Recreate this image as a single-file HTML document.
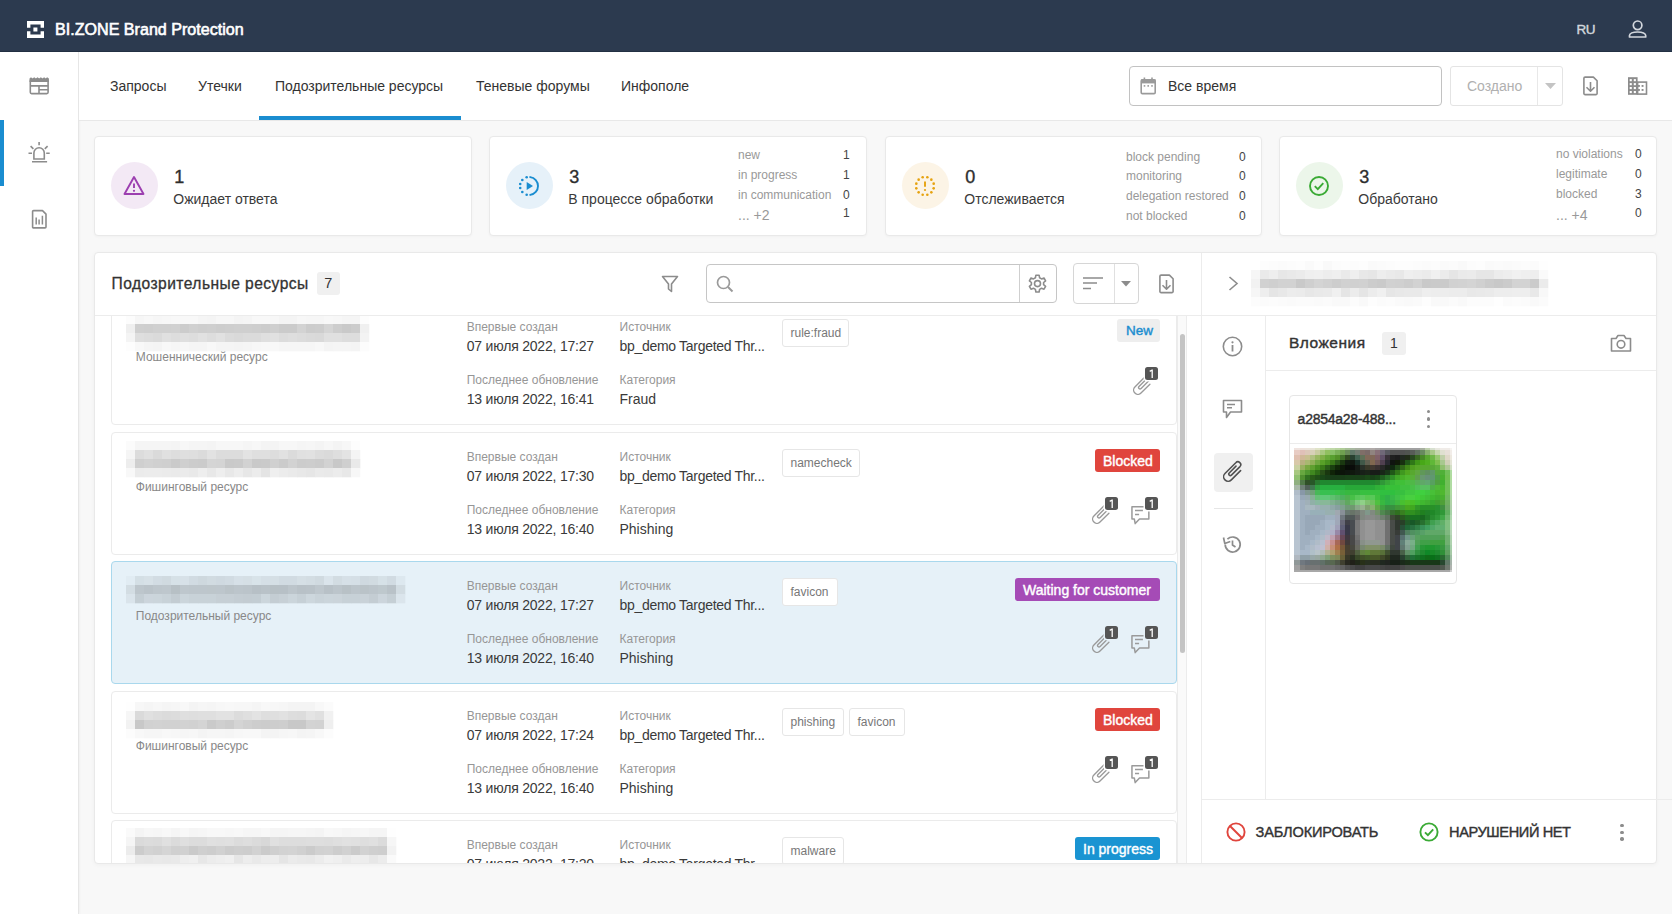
<!DOCTYPE html>
<html><head><meta charset="utf-8">
<style>
*{box-sizing:border-box;margin:0;padding:0}
html,body{width:1672px;height:914px;overflow:hidden;background:#f8f8f8;font-family:"Liberation Sans",sans-serif;color:#333}
.a{position:absolute}
.t{position:absolute;white-space:nowrap;line-height:1}
</style></head><body>
<div class="a" style="left:0px;top:0px;width:1672px;height:52px;background:#2c3a4f;border-bottom:1px solid #223043"></div>
<svg class="a" style="left:27px;top:21px" width="17" height="17" viewBox="0 0 17 17"><path d="M0 0H17V6.8H13.6V3.4H3.4V6.8H0Z M0 10.2H3.4V13.6H13.6V10.2H17V17H0Z" fill="#fff"/><rect x="6.4" y="6.5" width="4" height="4" fill="#fff"/></svg>
<div class="t" style="left:55px;top:20.87px;font-size:16.1px;color:#fff;-webkit-text-stroke:0.4px #fff;-webkit-text-stroke:0.6px #fff">BI.ZONE Brand Protection</div>
<div class="t" style="left:1576.5px;top:22.57px;font-size:13.5px;color:#d3d7dd;-webkit-text-stroke:0.4px #d3d7dd;letter-spacing:-0.6px">RU</div>
<svg class="a" style="left:1627px;top:19px" width="22" height="20" viewBox="0 0 22 20"><g fill="none" stroke="#d3d7dd" stroke-width="1.7"><circle cx="10.6" cy="6.3" r="4.3"/><path d="M2.5 18H18.7V16.6C18.7 14.3 15.5 13 10.6 13S2.5 14.3 2.5 16.6Z" stroke-linejoin="round"/></g></svg>
<div class="a" style="left:0px;top:52px;width:79px;height:862px;background:#fff;border-right:1px solid #e6e6e6;box-shadow:1px 0 2px rgba(0,0,0,0.035)"></div>
<div class="a" style="left:0px;top:120px;width:4px;height:66px;background:#1a8dd0"></div>
<svg class="a" style="left:29px;top:77px" width="21" height="18" viewBox="0 0 21 18"><g fill="none" stroke="#8c8c8c" stroke-width="1.6"><rect x="1.3" y="2.6" width="17.8" height="14" rx="1.3"/><path d="M1.3 8.85H19.1M10 8.85V16.6M10 12.8H19.1"/></g><path d="M0.5 5H19.9V1.6L18.1 0.2L16.7 1.4L15.1 0.2L13.5 1.4L11.9 0.2L10.2 1.4L8.5 0.2L6.9 1.4L5.2 0.2L3.5 1.4L2 0.2L0.5 1.6Z" fill="#8c8c8c"/></svg>
<svg class="a" style="left:28px;top:142px" width="22" height="21" viewBox="0 0 22 21"><g fill="none" stroke="#8c8c8c" stroke-width="1.6"><path d="M5.9 17H16.3V10.9A5.2 5.2 0 0 0 5.9 10.9Z"/><path d="M4 19.7H19.1M11.1 0V3.3M0.5 11.3H4M18.2 11.3H21.7M2.6 4.1L5.4 6.9M19.6 4.1L16.8 6.9"/></g></svg>
<svg class="a" style="left:31px;top:209px" width="17" height="20" viewBox="0 0 17 20"><g fill="none" stroke="#8c8c8c" stroke-width="1.6" stroke-linejoin="round"><path d="M1.6 2.6A1 1 0 0 1 2.6 1.6H11.5L15 5.1V17.9A1 1 0 0 1 14 18.9H2.6A1 1 0 0 1 1.6 17.9Z"/></g><g stroke="#8c8c8c" stroke-width="1.5"><path d="M5.2 15.5V8.4M8.1 15.5V10.6M11.4 15.5V6.8"/></g></svg>
<div class="a" style="left:79px;top:52px;width:1593px;height:69px;background:#fff;border-bottom:1px solid #e8e8e8"></div>
<div class="t" style="left:110px;top:78.95px;font-size:14px;color:#333">Запросы</div>
<div class="t" style="left:198px;top:78.95px;font-size:14px;color:#333">Утечки</div>
<div class="t" style="left:275px;top:78.95px;font-size:14px;color:#333">Подозрительные ресурсы</div>
<div class="t" style="left:476px;top:78.95px;font-size:14px;color:#333">Теневые форумы</div>
<div class="t" style="left:621px;top:78.95px;font-size:14px;color:#333">Инфополе</div>
<div class="a" style="left:259px;top:116px;width:202px;height:4px;background:#1a8dd0"></div>
<div class="a" style="left:1129px;top:66px;width:313px;height:40px;background:#fff;border:1.7px solid #c2c2c2;border-radius:4px"></div>
<svg class="a" style="left:1139px;top:77px" width="19" height="19" viewBox="0 0 19 19"><rect x="2.2" y="2.8" width="14" height="13.8" rx="1.2" fill="none" stroke="#9a9a9a" stroke-width="1.6"/><rect x="2" y="2.4" width="14.6" height="4" fill="#9a9a9a"/><path d="M5.4 0.4V3M13 0.4V3" stroke="#9a9a9a" stroke-width="1.6"/><g fill="#9a9a9a"><rect x="4.7" y="8.1" width="1.6" height="1.6"/><rect x="8.4" y="8.1" width="1.6" height="1.6"/><rect x="12.2" y="8.1" width="1.6" height="1.6"/></g></svg>
<div class="t" style="left:1168px;top:79.45px;font-size:14px;color:#333">Все время</div>
<div class="a" style="left:1450px;top:66px;width:113px;height:40px;background:#fff;border:1px solid #e4e4e4;border-radius:3px"></div>
<div class="a" style="left:1537px;top:67px;width:1px;height:38px;background:#e8e8e8"></div>
<div class="t" style="left:1467px;top:79.45px;font-size:14px;color:#b0b0b0">Создано</div>
<svg class="a" style="left:1545px;top:83px" width="11" height="6" viewBox="0 0 11 6"><path d="M0 0H11L5.5 6Z" fill="#c4c4c4"/></svg>
<svg class="a" style="left:1582px;top:76px" width="17" height="20" viewBox="0 0 17 20"><g fill="none" stroke="#8c8c8c" stroke-width="1.6" stroke-linejoin="round"><path d="M1.9 2.3A1.2 1.2 0 0 1 3.1 1.1H11.4L15.1 4.8V17.4A1.2 1.2 0 0 1 13.9 18.6H3.1A1.2 1.2 0 0 1 1.9 17.4Z"/><path d="M8.5 6V15.2M4.5 11.2L8.5 15.2L12.5 11.2"/></g></svg>
<svg class="a" style="left:1627px;top:77px" width="21" height="18" viewBox="0 0 21 18"><rect x="1" y="0.2" width="9.6" height="17.6" fill="#8c8c8c"/><g fill="#fff"><rect x="2.7" y="2.1" width="2.1" height="2.1"/><rect x="6.8" y="2.1" width="2.1" height="2.1"/><rect x="2.7" y="6.1" width="2.1" height="2.1"/><rect x="6.8" y="6.1" width="2.1" height="2.1"/><rect x="2.7" y="10" width="2.1" height="2.1"/><rect x="6.8" y="10" width="2.1" height="2.1"/><rect x="2.7" y="14" width="2.1" height="2.1"/><rect x="6.8" y="14" width="2.1" height="2.1"/></g><rect x="10.6" y="5.1" width="8.9" height="12" fill="none" stroke="#8c8c8c" stroke-width="1.6"/><g fill="#8c8c8c"><rect x="11" y="8" width="1.9" height="1.9"/><rect x="14.6" y="8" width="1.9" height="1.9"/><rect x="11" y="12" width="1.9" height="1.9"/><rect x="14.6" y="12" width="1.9" height="1.9"/></g></svg>
<div class="a" style="left:94px;top:136px;width:378px;height:100px;background:#fff;border:1px solid #e9e9e9;border-radius:4px;box-shadow:0 1px 3px rgba(0,0,0,0.03)"></div>
<div class="a" style="left:110.80000000000001px;top:162.4px;width:47px;height:47px;border-radius:50%;background:#f3e9f5"></div>
<svg class="a" style="left:123.30000000000001px;top:174.9px" width="22" height="22" viewBox="0 0 22 22"><g fill="none" stroke="#9c3fb0" stroke-width="1.9" stroke-linejoin="round"><path d="M11 2L20.5 19H1.5Z"/></g><path d="M11 8.5V13" stroke="#9c3fb0" stroke-width="1.9"/><circle cx="11" cy="15.8" r="1.1" fill="#9c3fb0"/></svg>
<div class="t" style="left:174.3px;top:167.76px;font-size:18px;color:#2e2e2e;-webkit-text-stroke:0.35px #2e2e2e">1</div>
<div class="t" style="left:173.3px;top:192.45px;font-size:14px;color:#3a3a3a">Ожидает ответа</div>
<div class="a" style="left:489px;top:136px;width:378px;height:100px;background:#fff;border:1px solid #e9e9e9;border-radius:4px;box-shadow:0 1px 3px rgba(0,0,0,0.03)"></div>
<div class="a" style="left:505.79999999999995px;top:162.4px;width:47px;height:47px;border-radius:50%;background:#e6f1f9"></div>
<svg class="a" style="left:518.3px;top:174.9px" width="22" height="22" viewBox="0 0 22 22"><path d="M12.2 2.08A9 9 0 0 1 12.2 19.92" fill="none" stroke="#1a8dd0" stroke-width="1.9" stroke-linecap="round"/><g fill="#1a8dd0"><circle cx="8.67" cy="2.31" r="1.3"/><circle cx="4.31" cy="4.98" r="1.3"/><circle cx="2.23" cy="8.98" r="1.3"/><circle cx="2.23" cy="13.02" r="1.3"/><circle cx="4.31" cy="17.02" r="1.3"/><circle cx="8.67" cy="19.69" r="1.3"/></g><path d="M8.7 6.9L15 11L8.7 15.1Z" fill="#1a8dd0"/></svg>
<div class="t" style="left:569.3px;top:167.76px;font-size:18px;color:#2e2e2e;-webkit-text-stroke:0.35px #2e2e2e">3</div>
<div class="t" style="left:568.3px;top:192.45px;font-size:14px;color:#3a3a3a">В процессе обработки</div>
<div class="t" style="left:738px;top:148.84px;font-size:12px;color:#999">new</div>
<div class="t" style="right:822.3px;top:148.84px;font-size:12px;color:#444">1</div>
<div class="t" style="left:738px;top:168.84px;font-size:12px;color:#999">in progress</div>
<div class="t" style="right:822.3px;top:168.84px;font-size:12px;color:#444">1</div>
<div class="t" style="left:738px;top:188.54px;font-size:12px;color:#999">in communication</div>
<div class="t" style="right:822.3px;top:188.54px;font-size:12px;color:#444">0</div>
<div class="t" style="left:738px;top:208.25px;font-size:14px;color:#999">... +2</div>
<div class="t" style="right:822.3px;top:207.34px;font-size:12px;color:#444">1</div>
<div class="a" style="left:885px;top:136px;width:377px;height:100px;background:#fff;border:1px solid #e9e9e9;border-radius:4px;box-shadow:0 1px 3px rgba(0,0,0,0.03)"></div>
<div class="a" style="left:901.8px;top:162.4px;width:47px;height:47px;border-radius:50%;background:#fcf4e6"></div>
<svg class="a" style="left:914.3px;top:174.9px" width="22" height="22" viewBox="0 0 22 22"><g fill="#e6a20f"><circle cx="19.69" cy="13.33" r="1.3"/><circle cx="17.36" cy="17.36" r="1.3"/><circle cx="13.33" cy="19.69" r="1.3"/><circle cx="8.67" cy="19.69" r="1.3"/><circle cx="4.64" cy="17.36" r="1.3"/><circle cx="2.31" cy="13.33" r="1.3"/><circle cx="2.31" cy="8.67" r="1.3"/><circle cx="4.64" cy="4.64" r="1.3"/><circle cx="8.67" cy="2.31" r="1.3"/><circle cx="13.33" cy="2.31" r="1.3"/><circle cx="17.36" cy="4.64" r="1.3"/><circle cx="19.69" cy="8.67" r="1.3"/></g><path d="M11 6.4V11.8" stroke="#e6a20f" stroke-width="1.9"/><circle cx="11" cy="15" r="1.1" fill="#e6a20f"/></svg>
<div class="t" style="left:965.3px;top:167.76px;font-size:18px;color:#2e2e2e;-webkit-text-stroke:0.35px #2e2e2e">0</div>
<div class="t" style="left:964.3px;top:192.45px;font-size:14px;color:#3a3a3a">Отслеживается</div>
<div class="t" style="left:1126px;top:150.74px;font-size:12px;color:#999">block pending</div>
<div class="t" style="right:426.3px;top:150.74px;font-size:12px;color:#444">0</div>
<div class="t" style="left:1126px;top:170.34px;font-size:12px;color:#999">monitoring</div>
<div class="t" style="right:426.3px;top:170.34px;font-size:12px;color:#444">0</div>
<div class="t" style="left:1126px;top:190.04px;font-size:12px;color:#999">delegation restored</div>
<div class="t" style="right:426.3px;top:190.04px;font-size:12px;color:#444">0</div>
<div class="t" style="left:1126px;top:209.74px;font-size:12px;color:#999">not blocked</div>
<div class="t" style="right:426.3px;top:209.74px;font-size:12px;color:#444">0</div>
<div class="a" style="left:1279px;top:136px;width:378px;height:100px;background:#fff;border:1px solid #e9e9e9;border-radius:4px;box-shadow:0 1px 3px rgba(0,0,0,0.03)"></div>
<div class="a" style="left:1295.8px;top:162.4px;width:47px;height:47px;border-radius:50%;background:#ecf6ea"></div>
<svg class="a" style="left:1308.3px;top:174.9px" width="22" height="22" viewBox="0 0 22 22"><circle cx="11" cy="11" r="9" fill="none" stroke="#3aaa35" stroke-width="1.9"/><path d="M6.8 11.2L9.8 14.2L15.3 8.2" fill="none" stroke="#3aaa35" stroke-width="1.9"/></svg>
<div class="t" style="left:1359.3px;top:167.76px;font-size:18px;color:#2e2e2e;-webkit-text-stroke:0.35px #2e2e2e">3</div>
<div class="t" style="left:1358.3px;top:192.45px;font-size:14px;color:#3a3a3a">Обработано</div>
<div class="t" style="left:1556px;top:148.34px;font-size:12px;color:#999">no violations</div>
<div class="t" style="right:30.3px;top:148.34px;font-size:12px;color:#444">0</div>
<div class="t" style="left:1556px;top:168.34px;font-size:12px;color:#999">legitimate</div>
<div class="t" style="right:30.3px;top:168.34px;font-size:12px;color:#444">0</div>
<div class="t" style="left:1556px;top:187.84px;font-size:12px;color:#999">blocked</div>
<div class="t" style="right:30.3px;top:187.84px;font-size:12px;color:#444">3</div>
<div class="t" style="left:1556px;top:207.75px;font-size:14px;color:#999">... +4</div>
<div class="t" style="right:30.3px;top:207.14px;font-size:12px;color:#444">0</div>
<div class="a" style="left:94px;top:252px;width:1563px;height:612px;background:#fff;border:1px solid #e9e9e9;border-radius:4px;box-shadow:0 1px 4px rgba(0,0,0,0.04)"></div>
<div class="a" style="left:1201px;top:253px;width:1px;height:610px;background:#ececec"></div>
<div class="a" style="left:95px;top:315px;width:1561px;height:1px;background:#ececec"></div>
<div class="t" style="left:111.5px;top:275.79px;font-size:15.6px;color:#333;-webkit-text-stroke:0.4px #333;letter-spacing:0.45px;-webkit-text-stroke:0.3px #333">Подозрительные ресурсы</div>
<div class="a" style="left:317px;top:272px;width:23px;height:23px;background:#f0f0f0;border-radius:3px"></div>
<div class="t" style="left:324.3px;top:276.32px;font-size:14.5px;color:#333">7</div>
<svg class="a" style="left:661px;top:275px" width="18" height="18" viewBox="0 0 18 18"><path d="M1.5 1.5H16.5L10.5 9V16.5L7.5 14V9Z" fill="none" stroke="#8c8c8c" stroke-width="1.6" stroke-linejoin="round"/></svg>
<div class="a" style="left:706px;top:264px;width:351px;height:39px;background:#fff;border:1.5px solid #c6c6c6;border-radius:4px"></div>
<div class="a" style="left:1019px;top:265px;width:1.3px;height:37px;background:#cfcfcf"></div>
<svg class="a" style="left:716px;top:275px" width="18" height="18" viewBox="0 0 18 18"><circle cx="7.5" cy="7.5" r="6" fill="none" stroke="#9a9a9a" stroke-width="1.7"/><path d="M12 12L16.5 16.5" stroke="#9a9a9a" stroke-width="2"/></svg>
<svg class="a" style="left:1027px;top:273px" width="21" height="21" viewBox="0 0 21 21"><g fill="none" stroke="#8c8c8c" stroke-width="1.6"><path d="M8.9 1.2H12.1L12.6 3.8L14.5 4.9L17 4L18.6 6.8L16.6 8.5V10.7L18.6 12.4L17 15.2L14.5 14.3L12.6 15.4L12.1 18H8.9L8.4 15.4L6.5 14.3L4 15.2L2.4 12.4L4.4 10.7V8.5L2.4 6.8L4 4L6.5 4.9L8.4 3.8Z" stroke-linejoin="round" transform="translate(0 1)"/><circle cx="10.5" cy="10.6" r="3"/></g></svg>
<div class="a" style="left:1073px;top:263px;width:66px;height:41px;background:#fff;border:1px solid #d6d6d6;border-radius:4px"></div>
<div class="a" style="left:1114px;top:264px;width:1px;height:39px;background:#e0e0e0"></div>
<svg class="a" style="left:1083px;top:277px" width="21" height="13" viewBox="0 0 21 13"><g stroke="#8c8c8c" stroke-width="1.6"><path d="M0 1H20M0 6H14M0 11.5H8"/></g></svg>
<svg class="a" style="left:1121px;top:281px" width="10" height="6" viewBox="0 0 10 6"><path d="M0 0H10L5 5.5Z" fill="#8c8c8c"/></svg>
<svg class="a" style="left:1158px;top:273.5px" width="17" height="20" viewBox="0 0 17 20"><g fill="none" stroke="#8c8c8c" stroke-width="1.6" stroke-linejoin="round"><path d="M1.9 2.3A1.2 1.2 0 0 1 3.1 1.1H11.4L15.1 4.8V17.4A1.2 1.2 0 0 1 13.9 18.6H3.1A1.2 1.2 0 0 1 1.9 17.4Z"/><path d="M8.5 6V15.2M4.5 11.2L8.5 15.2L12.5 11.2"/></g></svg>
<div class="a" style="left:95px;top:316px;width:1106px;height:547px;overflow:hidden">
<div class="a" style="left:16px;top:-14px;width:1066px;height:123px;background:#fff;border:1px solid #ebebeb;border-radius:4px">
<svg class="a" style="left:12.00px;top:10.00px;filter:blur(0.5px)" width="247" height="40"><rect x="2.00" y="2.00" width="9.30" height="9.30" fill="#fcfcfc"/><rect x="11.00" y="2.00" width="9.30" height="9.30" fill="#f6f6f6"/><rect x="20.00" y="2.00" width="9.30" height="9.30" fill="#f8f8f8"/><rect x="29.00" y="2.00" width="9.30" height="9.30" fill="#f6f6f6"/><rect x="38.00" y="2.00" width="9.30" height="9.30" fill="#f7f7f7"/><rect x="47.00" y="2.00" width="9.30" height="9.30" fill="#f8f8f8"/><rect x="56.00" y="2.00" width="9.30" height="9.30" fill="#f8f8f8"/><rect x="65.00" y="2.00" width="9.30" height="9.30" fill="#f8f8f8"/><rect x="74.00" y="2.00" width="9.30" height="9.30" fill="#f5f5f5"/><rect x="83.00" y="2.00" width="9.30" height="9.30" fill="#f4f4f4"/><rect x="92.00" y="2.00" width="9.30" height="9.30" fill="#f7f7f7"/><rect x="101.00" y="2.00" width="9.30" height="9.30" fill="#f7f7f7"/><rect x="110.00" y="2.00" width="9.30" height="9.30" fill="#f4f4f4"/><rect x="119.00" y="2.00" width="9.30" height="9.30" fill="#f5f5f5"/><rect x="128.00" y="2.00" width="9.30" height="9.30" fill="#f8f8f8"/><rect x="137.00" y="2.00" width="9.30" height="9.30" fill="#f8f8f8"/><rect x="146.00" y="2.00" width="9.30" height="9.30" fill="#f7f7f7"/><rect x="155.00" y="2.00" width="9.30" height="9.30" fill="#f4f4f4"/><rect x="164.00" y="2.00" width="9.30" height="9.30" fill="#f4f4f4"/><rect x="173.00" y="2.00" width="9.30" height="9.30" fill="#f7f7f7"/><rect x="182.00" y="2.00" width="9.30" height="9.30" fill="#f6f6f6"/><rect x="191.00" y="2.00" width="9.30" height="9.30" fill="#f6f6f6"/><rect x="200.00" y="2.00" width="9.30" height="9.30" fill="#f8f8f8"/><rect x="209.00" y="2.00" width="9.30" height="9.30" fill="#f7f7f7"/><rect x="218.00" y="2.00" width="9.30" height="9.30" fill="#f5f5f5"/><rect x="227.00" y="2.00" width="9.30" height="9.30" fill="#f5f5f5"/><rect x="236.00" y="2.00" width="9.30" height="9.30" fill="#fdfdfd"/><rect x="2.00" y="11.00" width="9.30" height="9.30" fill="#efefef"/><rect x="11.00" y="11.00" width="9.30" height="9.30" fill="#cfcfcf"/><rect x="20.00" y="11.00" width="9.30" height="9.30" fill="#cecece"/><rect x="29.00" y="11.00" width="9.30" height="9.30" fill="#d0d0d0"/><rect x="38.00" y="11.00" width="9.30" height="9.30" fill="#d0d0d0"/><rect x="47.00" y="11.00" width="9.30" height="9.30" fill="#d1d1d1"/><rect x="56.00" y="11.00" width="9.30" height="9.30" fill="#cccccc"/><rect x="65.00" y="11.00" width="9.30" height="9.30" fill="#d0d0d0"/><rect x="74.00" y="11.00" width="9.30" height="9.30" fill="#cecece"/><rect x="83.00" y="11.00" width="9.30" height="9.30" fill="#cfcfcf"/><rect x="92.00" y="11.00" width="9.30" height="9.30" fill="#cdcdcd"/><rect x="101.00" y="11.00" width="9.30" height="9.30" fill="#cecece"/><rect x="110.00" y="11.00" width="9.30" height="9.30" fill="#cfcfcf"/><rect x="119.00" y="11.00" width="9.30" height="9.30" fill="#cfcfcf"/><rect x="128.00" y="11.00" width="9.30" height="9.30" fill="#cecece"/><rect x="137.00" y="11.00" width="9.30" height="9.30" fill="#cccccc"/><rect x="146.00" y="11.00" width="9.30" height="9.30" fill="#cfcfcf"/><rect x="155.00" y="11.00" width="9.30" height="9.30" fill="#cbcbcb"/><rect x="164.00" y="11.00" width="9.30" height="9.30" fill="#cbcbcb"/><rect x="173.00" y="11.00" width="9.30" height="9.30" fill="#d3d3d3"/><rect x="182.00" y="11.00" width="9.30" height="9.30" fill="#cccccc"/><rect x="191.00" y="11.00" width="9.30" height="9.30" fill="#cdcdcd"/><rect x="200.00" y="11.00" width="9.30" height="9.30" fill="#d5d5d5"/><rect x="209.00" y="11.00" width="9.30" height="9.30" fill="#cdcdcd"/><rect x="218.00" y="11.00" width="9.30" height="9.30" fill="#c9c9c9"/><rect x="227.00" y="11.00" width="9.30" height="9.30" fill="#cccccc"/><rect x="236.00" y="11.00" width="9.30" height="9.30" fill="#f0f0f0"/><rect x="2.00" y="20.00" width="9.30" height="9.30" fill="#f4f4f4"/><rect x="11.00" y="20.00" width="9.30" height="9.30" fill="#dedede"/><rect x="20.00" y="20.00" width="9.30" height="9.30" fill="#dcdcdc"/><rect x="29.00" y="20.00" width="9.30" height="9.30" fill="#dadada"/><rect x="38.00" y="20.00" width="9.30" height="9.30" fill="#e0e0e0"/><rect x="47.00" y="20.00" width="9.30" height="9.30" fill="#dddddd"/><rect x="56.00" y="20.00" width="9.30" height="9.30" fill="#dfdfdf"/><rect x="65.00" y="20.00" width="9.30" height="9.30" fill="#dddddd"/><rect x="74.00" y="20.00" width="9.30" height="9.30" fill="#e1e1e1"/><rect x="83.00" y="20.00" width="9.30" height="9.30" fill="#dddddd"/><rect x="92.00" y="20.00" width="9.30" height="9.30" fill="#e1e1e1"/><rect x="101.00" y="20.00" width="9.30" height="9.30" fill="#dbdbdb"/><rect x="110.00" y="20.00" width="9.30" height="9.30" fill="#d9d9d9"/><rect x="119.00" y="20.00" width="9.30" height="9.30" fill="#dbdbdb"/><rect x="128.00" y="20.00" width="9.30" height="9.30" fill="#dbdbdb"/><rect x="137.00" y="20.00" width="9.30" height="9.30" fill="#dfdfdf"/><rect x="146.00" y="20.00" width="9.30" height="9.30" fill="#e1e1e1"/><rect x="155.00" y="20.00" width="9.30" height="9.30" fill="#dcdcdc"/><rect x="164.00" y="20.00" width="9.30" height="9.30" fill="#dedede"/><rect x="173.00" y="20.00" width="9.30" height="9.30" fill="#dcdcdc"/><rect x="182.00" y="20.00" width="9.30" height="9.30" fill="#dadada"/><rect x="191.00" y="20.00" width="9.30" height="9.30" fill="#d9d9d9"/><rect x="200.00" y="20.00" width="9.30" height="9.30" fill="#e0e0e0"/><rect x="209.00" y="20.00" width="9.30" height="9.30" fill="#e0e0e0"/><rect x="218.00" y="20.00" width="9.30" height="9.30" fill="#dddddd"/><rect x="227.00" y="20.00" width="9.30" height="9.30" fill="#dddddd"/><rect x="236.00" y="20.00" width="9.30" height="9.30" fill="#f3f3f3"/><rect x="2.00" y="29.00" width="9.30" height="9.30" fill="#fdfdfd"/><rect x="11.00" y="29.00" width="9.30" height="9.30" fill="#f8f8f8"/><rect x="20.00" y="29.00" width="9.30" height="9.30" fill="#f5f5f5"/><rect x="29.00" y="29.00" width="9.30" height="9.30" fill="#f4f4f4"/><rect x="38.00" y="29.00" width="9.30" height="9.30" fill="#f8f8f8"/><rect x="47.00" y="29.00" width="9.30" height="9.30" fill="#f6f6f6"/><rect x="56.00" y="29.00" width="9.30" height="9.30" fill="#f7f7f7"/><rect x="65.00" y="29.00" width="9.30" height="9.30" fill="#f5f5f5"/><rect x="74.00" y="29.00" width="9.30" height="9.30" fill="#f5f5f5"/><rect x="83.00" y="29.00" width="9.30" height="9.30" fill="#f8f8f8"/><rect x="92.00" y="29.00" width="9.30" height="9.30" fill="#f5f5f5"/><rect x="101.00" y="29.00" width="9.30" height="9.30" fill="#f5f5f5"/><rect x="110.00" y="29.00" width="9.30" height="9.30" fill="#f4f4f4"/><rect x="119.00" y="29.00" width="9.30" height="9.30" fill="#f5f5f5"/><rect x="128.00" y="29.00" width="9.30" height="9.30" fill="#f7f7f7"/><rect x="137.00" y="29.00" width="9.30" height="9.30" fill="#f8f8f8"/><rect x="146.00" y="29.00" width="9.30" height="9.30" fill="#f8f8f8"/><rect x="155.00" y="29.00" width="9.30" height="9.30" fill="#f6f6f6"/><rect x="164.00" y="29.00" width="9.30" height="9.30" fill="#f6f6f6"/><rect x="173.00" y="29.00" width="9.30" height="9.30" fill="#f6f6f6"/><rect x="182.00" y="29.00" width="9.30" height="9.30" fill="#f6f6f6"/><rect x="191.00" y="29.00" width="9.30" height="9.30" fill="#f8f8f8"/><rect x="200.00" y="29.00" width="9.30" height="9.30" fill="#f4f4f4"/><rect x="209.00" y="29.00" width="9.30" height="9.30" fill="#f5f5f5"/><rect x="218.00" y="29.00" width="9.30" height="9.30" fill="#f5f5f5"/><rect x="227.00" y="29.00" width="9.30" height="9.30" fill="#f4f4f4"/><rect x="236.00" y="29.00" width="9.30" height="9.30" fill="#fcfcfc"/></svg>
<div class="t" style="left:23.80000000000001px;top:47.64px;font-size:12px;color:#888">Мошеннический ресурс</div>
<div class="t" style="left:354.7px;top:17.74px;font-size:12px;color:#969696">Впервые создан</div>
<div class="t" style="left:354.7px;top:35.95px;font-size:14px;color:#3a3a3a;letter-spacing:-0.2px">07 июля 2022, 17:27</div>
<div class="t" style="left:507.5px;top:17.74px;font-size:12px;color:#969696">Источник</div>
<div class="t" style="left:507.5px;top:35.95px;font-size:14px;color:#3a3a3a;letter-spacing:-0.3px">bp_demo Targeted Thr...</div>
<div class="t" style="left:354.7px;top:70.54px;font-size:12px;color:#969696">Последнее обновление</div>
<div class="t" style="left:354.7px;top:88.75px;font-size:14px;color:#3a3a3a;letter-spacing:-0.2px">13 июля 2022, 16:41</div>
<div class="t" style="left:507.5px;top:70.54px;font-size:12px;color:#969696">Категория</div>
<div class="t" style="left:507.5px;top:88.75px;font-size:14px;color:#3a3a3a">Fraud</div>
<div class="a" style="left:670px;top:15.5px;width:67px;height:28px;background:#fff;border:1px solid #e6e6e6;border-radius:3px"></div>
<div class="t" style="left:678.5px;top:23.84px;font-size:12px;color:#777">rule:fraud</div>
<div class="a" style="left:1005px;top:15.8px;width:43px;height:23px;background:#eeeeee;border-radius:3px"></div>
<div class="t" style="left:1014px;top:21.17px;font-size:13.5px;color:#1a8dd0;-webkit-text-stroke:0.4px #1a8dd0">New</div>
<svg class="a" style="left:1020.5px;top:70px" width="20" height="22" viewBox="0 0 20 22"><g fill="none" stroke="#9a9a9a" stroke-width="1.35" stroke-linecap="round"><path d="M12.5 6.9L6.0 13.4A1.48 1.48 0 0 0 8.1 15.5L16.3 7.3A2.7 2.7 0 0 0 12.3 3.6L1.9 14.0A4.31 4.31 0 0 0 8.0 20.1L16.9 11.2"/></g></svg>
<div class="a" style="left:1032.5px;top:63.5px;width:13.2px;height:13.2px;background:#555;border-radius:2.5px;box-shadow:0 0 0 1.5px #fff"></div>
<svg class="a" style="left:1032.5px;top:63.5px" width="14" height="14" viewBox="0 0 14 14"><path d="M4.7 4.4L7.2 3V11" fill="none" stroke="#fff" stroke-width="1.3" stroke-linejoin="round"/></svg>
</div>
<div class="a" style="left:16px;top:116px;width:1066px;height:123px;background:#fff;border:1px solid #ebebeb;border-radius:4px">
<svg class="a" style="left:12.00px;top:6.00px;filter:blur(0.5px)" width="238" height="40"><rect x="2.00" y="2.00" width="9.30" height="9.30" fill="#fbfbfb"/><rect x="11.00" y="2.00" width="9.30" height="9.30" fill="#f5f5f5"/><rect x="20.00" y="2.00" width="9.30" height="9.30" fill="#f5f5f5"/><rect x="29.00" y="2.00" width="9.30" height="9.30" fill="#f5f5f5"/><rect x="38.00" y="2.00" width="9.30" height="9.30" fill="#f5f5f5"/><rect x="47.00" y="2.00" width="9.30" height="9.30" fill="#f4f4f4"/><rect x="56.00" y="2.00" width="9.30" height="9.30" fill="#f7f7f7"/><rect x="65.00" y="2.00" width="9.30" height="9.30" fill="#f5f5f5"/><rect x="74.00" y="2.00" width="9.30" height="9.30" fill="#f5f5f5"/><rect x="83.00" y="2.00" width="9.30" height="9.30" fill="#f4f4f4"/><rect x="92.00" y="2.00" width="9.30" height="9.30" fill="#f7f7f7"/><rect x="101.00" y="2.00" width="9.30" height="9.30" fill="#f7f7f7"/><rect x="110.00" y="2.00" width="9.30" height="9.30" fill="#f7f7f7"/><rect x="119.00" y="2.00" width="9.30" height="9.30" fill="#f5f5f5"/><rect x="128.00" y="2.00" width="9.30" height="9.30" fill="#f7f7f7"/><rect x="137.00" y="2.00" width="9.30" height="9.30" fill="#f4f4f4"/><rect x="146.00" y="2.00" width="9.30" height="9.30" fill="#f4f4f4"/><rect x="155.00" y="2.00" width="9.30" height="9.30" fill="#f7f7f7"/><rect x="164.00" y="2.00" width="9.30" height="9.30" fill="#f7f7f7"/><rect x="173.00" y="2.00" width="9.30" height="9.30" fill="#f5f5f5"/><rect x="182.00" y="2.00" width="9.30" height="9.30" fill="#f6f6f6"/><rect x="191.00" y="2.00" width="9.30" height="9.30" fill="#f4f4f4"/><rect x="200.00" y="2.00" width="9.30" height="9.30" fill="#f7f7f7"/><rect x="209.00" y="2.00" width="9.30" height="9.30" fill="#f4f4f4"/><rect x="218.00" y="2.00" width="9.30" height="9.30" fill="#f7f7f7"/><rect x="227.00" y="2.00" width="9.30" height="9.30" fill="#fdfdfd"/><rect x="2.00" y="11.00" width="9.30" height="9.30" fill="#f5f5f5"/><rect x="11.00" y="11.00" width="9.30" height="9.30" fill="#dcdcdc"/><rect x="20.00" y="11.00" width="9.30" height="9.30" fill="#e0e0e0"/><rect x="29.00" y="11.00" width="9.30" height="9.30" fill="#dadada"/><rect x="38.00" y="11.00" width="9.30" height="9.30" fill="#e0e0e0"/><rect x="47.00" y="11.00" width="9.30" height="9.30" fill="#dddddd"/><rect x="56.00" y="11.00" width="9.30" height="9.30" fill="#dfdfdf"/><rect x="65.00" y="11.00" width="9.30" height="9.30" fill="#dedede"/><rect x="74.00" y="11.00" width="9.30" height="9.30" fill="#dbdbdb"/><rect x="83.00" y="11.00" width="9.30" height="9.30" fill="#e2e2e2"/><rect x="92.00" y="11.00" width="9.30" height="9.30" fill="#dcdcdc"/><rect x="101.00" y="11.00" width="9.30" height="9.30" fill="#dcdcdc"/><rect x="110.00" y="11.00" width="9.30" height="9.30" fill="#dcdcdc"/><rect x="119.00" y="11.00" width="9.30" height="9.30" fill="#e3e3e3"/><rect x="128.00" y="11.00" width="9.30" height="9.30" fill="#dfdfdf"/><rect x="137.00" y="11.00" width="9.30" height="9.30" fill="#dfdfdf"/><rect x="146.00" y="11.00" width="9.30" height="9.30" fill="#dddddd"/><rect x="155.00" y="11.00" width="9.30" height="9.30" fill="#e1e1e1"/><rect x="164.00" y="11.00" width="9.30" height="9.30" fill="#dbdbdb"/><rect x="173.00" y="11.00" width="9.30" height="9.30" fill="#e0e0e0"/><rect x="182.00" y="11.00" width="9.30" height="9.30" fill="#e1e1e1"/><rect x="191.00" y="11.00" width="9.30" height="9.30" fill="#dcdcdc"/><rect x="200.00" y="11.00" width="9.30" height="9.30" fill="#dadada"/><rect x="209.00" y="11.00" width="9.30" height="9.30" fill="#dedede"/><rect x="218.00" y="11.00" width="9.30" height="9.30" fill="#e3e3e3"/><rect x="227.00" y="11.00" width="9.30" height="9.30" fill="#f4f4f4"/><rect x="2.00" y="20.00" width="9.30" height="9.30" fill="#ededed"/><rect x="11.00" y="20.00" width="9.30" height="9.30" fill="#cfcfcf"/><rect x="20.00" y="20.00" width="9.30" height="9.30" fill="#d2d2d2"/><rect x="29.00" y="20.00" width="9.30" height="9.30" fill="#d0d0d0"/><rect x="38.00" y="20.00" width="9.30" height="9.30" fill="#cfcfcf"/><rect x="47.00" y="20.00" width="9.30" height="9.30" fill="#cacaca"/><rect x="56.00" y="20.00" width="9.30" height="9.30" fill="#cfcfcf"/><rect x="65.00" y="20.00" width="9.30" height="9.30" fill="#cccccc"/><rect x="74.00" y="20.00" width="9.30" height="9.30" fill="#cbcbcb"/><rect x="83.00" y="20.00" width="9.30" height="9.30" fill="#d5d5d5"/><rect x="92.00" y="20.00" width="9.30" height="9.30" fill="#d4d4d4"/><rect x="101.00" y="20.00" width="9.30" height="9.30" fill="#c9c9c9"/><rect x="110.00" y="20.00" width="9.30" height="9.30" fill="#cacaca"/><rect x="119.00" y="20.00" width="9.30" height="9.30" fill="#d2d2d2"/><rect x="128.00" y="20.00" width="9.30" height="9.30" fill="#c9c9c9"/><rect x="137.00" y="20.00" width="9.30" height="9.30" fill="#cacaca"/><rect x="146.00" y="20.00" width="9.30" height="9.30" fill="#d0d0d0"/><rect x="155.00" y="20.00" width="9.30" height="9.30" fill="#cbcbcb"/><rect x="164.00" y="20.00" width="9.30" height="9.30" fill="#d2d2d2"/><rect x="173.00" y="20.00" width="9.30" height="9.30" fill="#cccccc"/><rect x="182.00" y="20.00" width="9.30" height="9.30" fill="#cdcdcd"/><rect x="191.00" y="20.00" width="9.30" height="9.30" fill="#cbcbcb"/><rect x="200.00" y="20.00" width="9.30" height="9.30" fill="#d2d2d2"/><rect x="209.00" y="20.00" width="9.30" height="9.30" fill="#c8c8c8"/><rect x="218.00" y="20.00" width="9.30" height="9.30" fill="#cfcfcf"/><rect x="227.00" y="20.00" width="9.30" height="9.30" fill="#e9e9e9"/><rect x="2.00" y="29.00" width="9.30" height="9.30" fill="#f8f8f8"/><rect x="11.00" y="29.00" width="9.30" height="9.30" fill="#ebebeb"/><rect x="20.00" y="29.00" width="9.30" height="9.30" fill="#ececec"/><rect x="29.00" y="29.00" width="9.30" height="9.30" fill="#ececec"/><rect x="38.00" y="29.00" width="9.30" height="9.30" fill="#ebebeb"/><rect x="47.00" y="29.00" width="9.30" height="9.30" fill="#eaeaea"/><rect x="56.00" y="29.00" width="9.30" height="9.30" fill="#ebebeb"/><rect x="65.00" y="29.00" width="9.30" height="9.30" fill="#e9e9e9"/><rect x="74.00" y="29.00" width="9.30" height="9.30" fill="#eeeeee"/><rect x="83.00" y="29.00" width="9.30" height="9.30" fill="#e8e8e8"/><rect x="92.00" y="29.00" width="9.30" height="9.30" fill="#eeeeee"/><rect x="101.00" y="29.00" width="9.30" height="9.30" fill="#e8e8e8"/><rect x="110.00" y="29.00" width="9.30" height="9.30" fill="#ededed"/><rect x="119.00" y="29.00" width="9.30" height="9.30" fill="#e7e7e7"/><rect x="128.00" y="29.00" width="9.30" height="9.30" fill="#ececec"/><rect x="137.00" y="29.00" width="9.30" height="9.30" fill="#e4e4e4"/><rect x="146.00" y="29.00" width="9.30" height="9.30" fill="#efefef"/><rect x="155.00" y="29.00" width="9.30" height="9.30" fill="#ececec"/><rect x="164.00" y="29.00" width="9.30" height="9.30" fill="#eaeaea"/><rect x="173.00" y="29.00" width="9.30" height="9.30" fill="#e8e8e8"/><rect x="182.00" y="29.00" width="9.30" height="9.30" fill="#e6e6e6"/><rect x="191.00" y="29.00" width="9.30" height="9.30" fill="#eaeaea"/><rect x="200.00" y="29.00" width="9.30" height="9.30" fill="#e9e9e9"/><rect x="209.00" y="29.00" width="9.30" height="9.30" fill="#ececec"/><rect x="218.00" y="29.00" width="9.30" height="9.30" fill="#e8e8e8"/><rect x="227.00" y="29.00" width="9.30" height="9.30" fill="#f7f7f7"/></svg>
<div class="t" style="left:23.80000000000001px;top:47.64px;font-size:12px;color:#888">Фишинговый ресурс</div>
<div class="t" style="left:354.7px;top:17.74px;font-size:12px;color:#969696">Впервые создан</div>
<div class="t" style="left:354.7px;top:35.95px;font-size:14px;color:#3a3a3a;letter-spacing:-0.2px">07 июля 2022, 17:30</div>
<div class="t" style="left:507.5px;top:17.74px;font-size:12px;color:#969696">Источник</div>
<div class="t" style="left:507.5px;top:35.95px;font-size:14px;color:#3a3a3a;letter-spacing:-0.3px">bp_demo Targeted Thr...</div>
<div class="t" style="left:354.7px;top:70.54px;font-size:12px;color:#969696">Последнее обновление</div>
<div class="t" style="left:354.7px;top:88.75px;font-size:14px;color:#3a3a3a;letter-spacing:-0.2px">13 июля 2022, 16:40</div>
<div class="t" style="left:507.5px;top:70.54px;font-size:12px;color:#969696">Категория</div>
<div class="t" style="left:507.5px;top:88.75px;font-size:14px;color:#3a3a3a">Phishing</div>
<div class="a" style="left:670px;top:15.5px;width:78px;height:28px;background:#fff;border:1px solid #e6e6e6;border-radius:3px"></div>
<div class="t" style="left:678.5px;top:23.84px;font-size:12px;color:#777">namecheck</div>
<div class="a" style="left:983px;top:15.8px;width:65px;height:23px;background:#e0453d;border-radius:3px"></div>
<div class="t" style="left:991px;top:20.75px;font-size:14px;color:#fff;-webkit-text-stroke:0.4px #fff">Blocked</div>
<svg class="a" style="left:980px;top:69px" width="20" height="22" viewBox="0 0 20 22"><g fill="none" stroke="#9a9a9a" stroke-width="1.35" stroke-linecap="round"><path d="M12.5 6.9L6.0 13.4A1.48 1.48 0 0 0 8.1 15.5L16.3 7.3A2.7 2.7 0 0 0 12.3 3.6L1.9 14.0A4.31 4.31 0 0 0 8.0 20.1L16.9 11.2"/></g></svg>
<div class="a" style="left:993.3px;top:63.5px;width:13.2px;height:13.2px;background:#555;border-radius:2.5px;box-shadow:0 0 0 1.5px #fff"></div>
<svg class="a" style="left:993.3px;top:63.5px" width="14" height="14" viewBox="0 0 14 14"><path d="M4.7 4.4L7.2 3V11" fill="none" stroke="#fff" stroke-width="1.3" stroke-linejoin="round"/></svg>
<svg class="a" style="left:1018px;top:72px" width="20" height="20" viewBox="0 0 20 20"><path d="M1.95 1.75H18.85V13.95H9.5L5.2 18.6L4.3 13.95H1.95Z" fill="none" stroke="#9a9a9a" stroke-width="1.5" stroke-linejoin="round"/><path d="M5 5.5H12.9M5 9.4H9.1" stroke="#9a9a9a" stroke-width="1.5"/></svg>
<div class="a" style="left:1032.6px;top:63.5px;width:13.2px;height:13.2px;background:#555;border-radius:2.5px;box-shadow:0 0 0 1.5px #fff"></div>
<svg class="a" style="left:1032.6px;top:63.5px" width="14" height="14" viewBox="0 0 14 14"><path d="M4.7 4.4L7.2 3V11" fill="none" stroke="#fff" stroke-width="1.3" stroke-linejoin="round"/></svg>
</div>
<div class="a" style="left:16px;top:245px;width:1066px;height:123px;background:#e6f1f8;border:1px solid #a9d8ed;border-radius:4px">
<svg class="a" style="left:12.00px;top:12.00px;filter:blur(0.5px)" width="283" height="31"><rect x="2.00" y="2.00" width="9.30" height="9.30" fill="#e1ecf3"/><rect x="11.00" y="2.00" width="9.30" height="9.30" fill="#d4dfe5"/><rect x="20.00" y="2.00" width="9.30" height="9.30" fill="#d7e1e7"/><rect x="29.00" y="2.00" width="9.30" height="9.30" fill="#d2dce3"/><rect x="38.00" y="2.00" width="9.30" height="9.30" fill="#d0dae0"/><rect x="47.00" y="2.00" width="9.30" height="9.30" fill="#d6e1e7"/><rect x="56.00" y="2.00" width="9.30" height="9.30" fill="#d7e1e8"/><rect x="65.00" y="2.00" width="9.30" height="9.30" fill="#d1dbe2"/><rect x="74.00" y="2.00" width="9.30" height="9.30" fill="#ced8de"/><rect x="83.00" y="2.00" width="9.30" height="9.30" fill="#d1dbe1"/><rect x="92.00" y="2.00" width="9.30" height="9.30" fill="#cfd9e0"/><rect x="101.00" y="2.00" width="9.30" height="9.30" fill="#d1dbe2"/><rect x="110.00" y="2.00" width="9.30" height="9.30" fill="#d6e0e7"/><rect x="119.00" y="2.00" width="9.30" height="9.30" fill="#d5dfe5"/><rect x="128.00" y="2.00" width="9.30" height="9.30" fill="#d8e3e9"/><rect x="137.00" y="2.00" width="9.30" height="9.30" fill="#d5dfe6"/><rect x="146.00" y="2.00" width="9.30" height="9.30" fill="#d5dfe5"/><rect x="155.00" y="2.00" width="9.30" height="9.30" fill="#d1dbe2"/><rect x="164.00" y="2.00" width="9.30" height="9.30" fill="#d1dbe2"/><rect x="173.00" y="2.00" width="9.30" height="9.30" fill="#d5dfe5"/><rect x="182.00" y="2.00" width="9.30" height="9.30" fill="#d3dde3"/><rect x="191.00" y="2.00" width="9.30" height="9.30" fill="#d0dae0"/><rect x="200.00" y="2.00" width="9.30" height="9.30" fill="#dae4eb"/><rect x="209.00" y="2.00" width="9.30" height="9.30" fill="#d2dce2"/><rect x="218.00" y="2.00" width="9.30" height="9.30" fill="#d6e0e7"/><rect x="227.00" y="2.00" width="9.30" height="9.30" fill="#d5dfe6"/><rect x="236.00" y="2.00" width="9.30" height="9.30" fill="#cfd9e0"/><rect x="245.00" y="2.00" width="9.30" height="9.30" fill="#d1dbe1"/><rect x="254.00" y="2.00" width="9.30" height="9.30" fill="#d6e1e7"/><rect x="263.00" y="2.00" width="9.30" height="9.30" fill="#d1dbe2"/><rect x="272.00" y="2.00" width="9.30" height="9.30" fill="#dde8ef"/><rect x="2.00" y="11.00" width="9.30" height="9.30" fill="#d3dde3"/><rect x="11.00" y="11.00" width="9.30" height="9.30" fill="#bdc6cc"/><rect x="20.00" y="11.00" width="9.30" height="9.30" fill="#bac3c9"/><rect x="29.00" y="11.00" width="9.30" height="9.30" fill="#bdc6cc"/><rect x="38.00" y="11.00" width="9.30" height="9.30" fill="#bec7cd"/><rect x="47.00" y="11.00" width="9.30" height="9.30" fill="#b7c0c5"/><rect x="56.00" y="11.00" width="9.30" height="9.30" fill="#bec7cd"/><rect x="65.00" y="11.00" width="9.30" height="9.30" fill="#bdc6cc"/><rect x="74.00" y="11.00" width="9.30" height="9.30" fill="#bdc6cc"/><rect x="83.00" y="11.00" width="9.30" height="9.30" fill="#bdc6cb"/><rect x="92.00" y="11.00" width="9.30" height="9.30" fill="#bdc6cc"/><rect x="101.00" y="11.00" width="9.30" height="9.30" fill="#bac3c8"/><rect x="110.00" y="11.00" width="9.30" height="9.30" fill="#bcc5cb"/><rect x="119.00" y="11.00" width="9.30" height="9.30" fill="#bbc4ca"/><rect x="128.00" y="11.00" width="9.30" height="9.30" fill="#b7c0c6"/><rect x="137.00" y="11.00" width="9.30" height="9.30" fill="#b9c2c8"/><rect x="146.00" y="11.00" width="9.30" height="9.30" fill="#b7c0c5"/><rect x="155.00" y="11.00" width="9.30" height="9.30" fill="#b7c0c6"/><rect x="164.00" y="11.00" width="9.30" height="9.30" fill="#bcc5cb"/><rect x="173.00" y="11.00" width="9.30" height="9.30" fill="#b8c1c7"/><rect x="182.00" y="11.00" width="9.30" height="9.30" fill="#b9c2c8"/><rect x="191.00" y="11.00" width="9.30" height="9.30" fill="#bec7cd"/><rect x="200.00" y="11.00" width="9.30" height="9.30" fill="#b8c1c7"/><rect x="209.00" y="11.00" width="9.30" height="9.30" fill="#bcc5cb"/><rect x="218.00" y="11.00" width="9.30" height="9.30" fill="#b8c1c6"/><rect x="227.00" y="11.00" width="9.30" height="9.30" fill="#bcc5cb"/><rect x="236.00" y="11.00" width="9.30" height="9.30" fill="#bac3c8"/><rect x="245.00" y="11.00" width="9.30" height="9.30" fill="#bcc5cb"/><rect x="254.00" y="11.00" width="9.30" height="9.30" fill="#bec8cd"/><rect x="263.00" y="11.00" width="9.30" height="9.30" fill="#b9c2c8"/><rect x="272.00" y="11.00" width="9.30" height="9.30" fill="#d2dce2"/><rect x="2.00" y="20.00" width="9.30" height="9.30" fill="#dae4eb"/><rect x="11.00" y="20.00" width="9.30" height="9.30" fill="#c4ced4"/><rect x="20.00" y="20.00" width="9.30" height="9.30" fill="#ccd5dc"/><rect x="29.00" y="20.00" width="9.30" height="9.30" fill="#cbd5db"/><rect x="38.00" y="20.00" width="9.30" height="9.30" fill="#c8d2d8"/><rect x="47.00" y="20.00" width="9.30" height="9.30" fill="#c3ccd2"/><rect x="56.00" y="20.00" width="9.30" height="9.30" fill="#cbd5db"/><rect x="65.00" y="20.00" width="9.30" height="9.30" fill="#c8d2d8"/><rect x="74.00" y="20.00" width="9.30" height="9.30" fill="#c8d2d8"/><rect x="83.00" y="20.00" width="9.30" height="9.30" fill="#c8d2d8"/><rect x="92.00" y="20.00" width="9.30" height="9.30" fill="#c6cfd5"/><rect x="101.00" y="20.00" width="9.30" height="9.30" fill="#c6cfd5"/><rect x="110.00" y="20.00" width="9.30" height="9.30" fill="#c4cdd3"/><rect x="119.00" y="20.00" width="9.30" height="9.30" fill="#c3ccd2"/><rect x="128.00" y="20.00" width="9.30" height="9.30" fill="#c3cdd3"/><rect x="137.00" y="20.00" width="9.30" height="9.30" fill="#ccd6dc"/><rect x="146.00" y="20.00" width="9.30" height="9.30" fill="#c4cdd3"/><rect x="155.00" y="20.00" width="9.30" height="9.30" fill="#c7d0d6"/><rect x="164.00" y="20.00" width="9.30" height="9.30" fill="#cbd5db"/><rect x="173.00" y="20.00" width="9.30" height="9.30" fill="#c6d0d6"/><rect x="182.00" y="20.00" width="9.30" height="9.30" fill="#cdd7dd"/><rect x="191.00" y="20.00" width="9.30" height="9.30" fill="#c9d3d9"/><rect x="200.00" y="20.00" width="9.30" height="9.30" fill="#cbd5db"/><rect x="209.00" y="20.00" width="9.30" height="9.30" fill="#cbd4da"/><rect x="218.00" y="20.00" width="9.30" height="9.30" fill="#c7d1d7"/><rect x="227.00" y="20.00" width="9.30" height="9.30" fill="#c7d1d7"/><rect x="236.00" y="20.00" width="9.30" height="9.30" fill="#c9d2d8"/><rect x="245.00" y="20.00" width="9.30" height="9.30" fill="#c4cdd3"/><rect x="254.00" y="20.00" width="9.30" height="9.30" fill="#ccd5dc"/><rect x="263.00" y="20.00" width="9.30" height="9.30" fill="#c5cfd5"/><rect x="272.00" y="20.00" width="9.30" height="9.30" fill="#dbe5ec"/></svg>
<div class="t" style="left:23.80000000000001px;top:47.64px;font-size:12px;color:#888">Подозрительный ресурс</div>
<div class="t" style="left:354.7px;top:17.74px;font-size:12px;color:#969696">Впервые создан</div>
<div class="t" style="left:354.7px;top:35.95px;font-size:14px;color:#3a3a3a;letter-spacing:-0.2px">07 июля 2022, 17:27</div>
<div class="t" style="left:507.5px;top:17.74px;font-size:12px;color:#969696">Источник</div>
<div class="t" style="left:507.5px;top:35.95px;font-size:14px;color:#3a3a3a;letter-spacing:-0.3px">bp_demo Targeted Thr...</div>
<div class="t" style="left:354.7px;top:70.54px;font-size:12px;color:#969696">Последнее обновление</div>
<div class="t" style="left:354.7px;top:88.75px;font-size:14px;color:#3a3a3a;letter-spacing:-0.2px">13 июля 2022, 16:40</div>
<div class="t" style="left:507.5px;top:70.54px;font-size:12px;color:#969696">Категория</div>
<div class="t" style="left:507.5px;top:88.75px;font-size:14px;color:#3a3a3a">Phishing</div>
<div class="a" style="left:670px;top:15.5px;width:56px;height:28px;background:#fff;border:1px solid #e6e6e6;border-radius:3px"></div>
<div class="t" style="left:678.5px;top:23.84px;font-size:12px;color:#777">favicon</div>
<div class="a" style="left:903px;top:15.8px;width:145px;height:23px;background:#a54bb6;border-radius:3px"></div>
<div class="t" style="left:911px;top:20.75px;font-size:14px;color:#fff;-webkit-text-stroke:0.4px #fff">Waiting for customer</div>
<svg class="a" style="left:980px;top:69px" width="20" height="22" viewBox="0 0 20 22"><g fill="none" stroke="#9a9a9a" stroke-width="1.35" stroke-linecap="round"><path d="M12.5 6.9L6.0 13.4A1.48 1.48 0 0 0 8.1 15.5L16.3 7.3A2.7 2.7 0 0 0 12.3 3.6L1.9 14.0A4.31 4.31 0 0 0 8.0 20.1L16.9 11.2"/></g></svg>
<div class="a" style="left:993.3px;top:63.5px;width:13.2px;height:13.2px;background:#555;border-radius:2.5px;box-shadow:0 0 0 1.5px #e6f1f8"></div>
<svg class="a" style="left:993.3px;top:63.5px" width="14" height="14" viewBox="0 0 14 14"><path d="M4.7 4.4L7.2 3V11" fill="none" stroke="#fff" stroke-width="1.3" stroke-linejoin="round"/></svg>
<svg class="a" style="left:1018px;top:72px" width="20" height="20" viewBox="0 0 20 20"><path d="M1.95 1.75H18.85V13.95H9.5L5.2 18.6L4.3 13.95H1.95Z" fill="none" stroke="#9a9a9a" stroke-width="1.5" stroke-linejoin="round"/><path d="M5 5.5H12.9M5 9.4H9.1" stroke="#9a9a9a" stroke-width="1.5"/></svg>
<div class="a" style="left:1032.6px;top:63.5px;width:13.2px;height:13.2px;background:#555;border-radius:2.5px;box-shadow:0 0 0 1.5px #e6f1f8"></div>
<svg class="a" style="left:1032.6px;top:63.5px" width="14" height="14" viewBox="0 0 14 14"><path d="M4.7 4.4L7.2 3V11" fill="none" stroke="#fff" stroke-width="1.3" stroke-linejoin="round"/></svg>
</div>
<div class="a" style="left:16px;top:375px;width:1066px;height:123px;background:#fff;border:1px solid #ebebeb;border-radius:4px">
<svg class="a" style="left:12.00px;top:8.00px;filter:blur(0.5px)" width="211" height="40"><rect x="2.00" y="2.00" width="9.30" height="9.30" fill="#fefefe"/><rect x="11.00" y="2.00" width="9.30" height="9.30" fill="#f7f7f7"/><rect x="20.00" y="2.00" width="9.30" height="9.30" fill="#f5f5f5"/><rect x="29.00" y="2.00" width="9.30" height="9.30" fill="#f7f7f7"/><rect x="38.00" y="2.00" width="9.30" height="9.30" fill="#f5f5f5"/><rect x="47.00" y="2.00" width="9.30" height="9.30" fill="#f6f6f6"/><rect x="56.00" y="2.00" width="9.30" height="9.30" fill="#f8f8f8"/><rect x="65.00" y="2.00" width="9.30" height="9.30" fill="#f4f4f4"/><rect x="74.00" y="2.00" width="9.30" height="9.30" fill="#f6f6f6"/><rect x="83.00" y="2.00" width="9.30" height="9.30" fill="#f5f5f5"/><rect x="92.00" y="2.00" width="9.30" height="9.30" fill="#f7f7f7"/><rect x="101.00" y="2.00" width="9.30" height="9.30" fill="#f8f8f8"/><rect x="110.00" y="2.00" width="9.30" height="9.30" fill="#f7f7f7"/><rect x="119.00" y="2.00" width="9.30" height="9.30" fill="#f7f7f7"/><rect x="128.00" y="2.00" width="9.30" height="9.30" fill="#f5f5f5"/><rect x="137.00" y="2.00" width="9.30" height="9.30" fill="#f8f8f8"/><rect x="146.00" y="2.00" width="9.30" height="9.30" fill="#f7f7f7"/><rect x="155.00" y="2.00" width="9.30" height="9.30" fill="#f6f6f6"/><rect x="164.00" y="2.00" width="9.30" height="9.30" fill="#f4f4f4"/><rect x="173.00" y="2.00" width="9.30" height="9.30" fill="#f4f4f4"/><rect x="182.00" y="2.00" width="9.30" height="9.30" fill="#f4f4f4"/><rect x="191.00" y="2.00" width="9.30" height="9.30" fill="#f8f8f8"/><rect x="200.00" y="2.00" width="9.30" height="9.30" fill="#fbfbfb"/><rect x="2.00" y="11.00" width="9.30" height="9.30" fill="#f6f6f6"/><rect x="11.00" y="11.00" width="9.30" height="9.30" fill="#dadada"/><rect x="20.00" y="11.00" width="9.30" height="9.30" fill="#e0e0e0"/><rect x="29.00" y="11.00" width="9.30" height="9.30" fill="#dddddd"/><rect x="38.00" y="11.00" width="9.30" height="9.30" fill="#dbdbdb"/><rect x="47.00" y="11.00" width="9.30" height="9.30" fill="#dcdcdc"/><rect x="56.00" y="11.00" width="9.30" height="9.30" fill="#dfdfdf"/><rect x="65.00" y="11.00" width="9.30" height="9.30" fill="#dedede"/><rect x="74.00" y="11.00" width="9.30" height="9.30" fill="#dfdfdf"/><rect x="83.00" y="11.00" width="9.30" height="9.30" fill="#dfdfdf"/><rect x="92.00" y="11.00" width="9.30" height="9.30" fill="#e2e2e2"/><rect x="101.00" y="11.00" width="9.30" height="9.30" fill="#e2e2e2"/><rect x="110.00" y="11.00" width="9.30" height="9.30" fill="#dcdcdc"/><rect x="119.00" y="11.00" width="9.30" height="9.30" fill="#dfdfdf"/><rect x="128.00" y="11.00" width="9.30" height="9.30" fill="#e3e3e3"/><rect x="137.00" y="11.00" width="9.30" height="9.30" fill="#dedede"/><rect x="146.00" y="11.00" width="9.30" height="9.30" fill="#dfdfdf"/><rect x="155.00" y="11.00" width="9.30" height="9.30" fill="#e1e1e1"/><rect x="164.00" y="11.00" width="9.30" height="9.30" fill="#dddddd"/><rect x="173.00" y="11.00" width="9.30" height="9.30" fill="#dcdcdc"/><rect x="182.00" y="11.00" width="9.30" height="9.30" fill="#e4e4e4"/><rect x="191.00" y="11.00" width="9.30" height="9.30" fill="#e0e0e0"/><rect x="200.00" y="11.00" width="9.30" height="9.30" fill="#f1f1f1"/><rect x="2.00" y="20.00" width="9.30" height="9.30" fill="#f2f2f2"/><rect x="11.00" y="20.00" width="9.30" height="9.30" fill="#c8c8c8"/><rect x="20.00" y="20.00" width="9.30" height="9.30" fill="#d1d1d1"/><rect x="29.00" y="20.00" width="9.30" height="9.30" fill="#d2d2d2"/><rect x="38.00" y="20.00" width="9.30" height="9.30" fill="#d1d1d1"/><rect x="47.00" y="20.00" width="9.30" height="9.30" fill="#d1d1d1"/><rect x="56.00" y="20.00" width="9.30" height="9.30" fill="#d2d2d2"/><rect x="65.00" y="20.00" width="9.30" height="9.30" fill="#d1d1d1"/><rect x="74.00" y="20.00" width="9.30" height="9.30" fill="#d4d4d4"/><rect x="83.00" y="20.00" width="9.30" height="9.30" fill="#cacaca"/><rect x="92.00" y="20.00" width="9.30" height="9.30" fill="#cfcfcf"/><rect x="101.00" y="20.00" width="9.30" height="9.30" fill="#cccccc"/><rect x="110.00" y="20.00" width="9.30" height="9.30" fill="#d4d4d4"/><rect x="119.00" y="20.00" width="9.30" height="9.30" fill="#d0d0d0"/><rect x="128.00" y="20.00" width="9.30" height="9.30" fill="#cdcdcd"/><rect x="137.00" y="20.00" width="9.30" height="9.30" fill="#cccccc"/><rect x="146.00" y="20.00" width="9.30" height="9.30" fill="#cdcdcd"/><rect x="155.00" y="20.00" width="9.30" height="9.30" fill="#cecece"/><rect x="164.00" y="20.00" width="9.30" height="9.30" fill="#c8c8c8"/><rect x="173.00" y="20.00" width="9.30" height="9.30" fill="#c8c8c8"/><rect x="182.00" y="20.00" width="9.30" height="9.30" fill="#d3d3d3"/><rect x="191.00" y="20.00" width="9.30" height="9.30" fill="#d2d2d2"/><rect x="200.00" y="20.00" width="9.30" height="9.30" fill="#efefef"/><rect x="2.00" y="29.00" width="9.30" height="9.30" fill="#fcfcfc"/><rect x="11.00" y="29.00" width="9.30" height="9.30" fill="#f8f8f8"/><rect x="20.00" y="29.00" width="9.30" height="9.30" fill="#f6f6f6"/><rect x="29.00" y="29.00" width="9.30" height="9.30" fill="#f6f6f6"/><rect x="38.00" y="29.00" width="9.30" height="9.30" fill="#f8f8f8"/><rect x="47.00" y="29.00" width="9.30" height="9.30" fill="#f7f7f7"/><rect x="56.00" y="29.00" width="9.30" height="9.30" fill="#f6f6f6"/><rect x="65.00" y="29.00" width="9.30" height="9.30" fill="#f7f7f7"/><rect x="74.00" y="29.00" width="9.30" height="9.30" fill="#f4f4f4"/><rect x="83.00" y="29.00" width="9.30" height="9.30" fill="#f6f6f6"/><rect x="92.00" y="29.00" width="9.30" height="9.30" fill="#f6f6f6"/><rect x="101.00" y="29.00" width="9.30" height="9.30" fill="#f5f5f5"/><rect x="110.00" y="29.00" width="9.30" height="9.30" fill="#f7f7f7"/><rect x="119.00" y="29.00" width="9.30" height="9.30" fill="#f8f8f8"/><rect x="128.00" y="29.00" width="9.30" height="9.30" fill="#f8f8f8"/><rect x="137.00" y="29.00" width="9.30" height="9.30" fill="#f4f4f4"/><rect x="146.00" y="29.00" width="9.30" height="9.30" fill="#f4f4f4"/><rect x="155.00" y="29.00" width="9.30" height="9.30" fill="#f6f6f6"/><rect x="164.00" y="29.00" width="9.30" height="9.30" fill="#f7f7f7"/><rect x="173.00" y="29.00" width="9.30" height="9.30" fill="#f4f4f4"/><rect x="182.00" y="29.00" width="9.30" height="9.30" fill="#f5f5f5"/><rect x="191.00" y="29.00" width="9.30" height="9.30" fill="#f8f8f8"/><rect x="200.00" y="29.00" width="9.30" height="9.30" fill="#fcfcfc"/></svg>
<div class="t" style="left:23.80000000000001px;top:47.64px;font-size:12px;color:#888">Фишинговый ресурс</div>
<div class="t" style="left:354.7px;top:17.74px;font-size:12px;color:#969696">Впервые создан</div>
<div class="t" style="left:354.7px;top:35.95px;font-size:14px;color:#3a3a3a;letter-spacing:-0.2px">07 июля 2022, 17:24</div>
<div class="t" style="left:507.5px;top:17.74px;font-size:12px;color:#969696">Источник</div>
<div class="t" style="left:507.5px;top:35.95px;font-size:14px;color:#3a3a3a;letter-spacing:-0.3px">bp_demo Targeted Thr...</div>
<div class="t" style="left:354.7px;top:70.54px;font-size:12px;color:#969696">Последнее обновление</div>
<div class="t" style="left:354.7px;top:88.75px;font-size:14px;color:#3a3a3a;letter-spacing:-0.2px">13 июля 2022, 16:40</div>
<div class="t" style="left:507.5px;top:70.54px;font-size:12px;color:#969696">Категория</div>
<div class="t" style="left:507.5px;top:88.75px;font-size:14px;color:#3a3a3a">Phishing</div>
<div class="a" style="left:670px;top:15.5px;width:62px;height:28px;background:#fff;border:1px solid #e6e6e6;border-radius:3px"></div>
<div class="t" style="left:678.5px;top:23.84px;font-size:12px;color:#777">phishing</div>
<div class="a" style="left:737px;top:15.5px;width:56px;height:28px;background:#fff;border:1px solid #e6e6e6;border-radius:3px"></div>
<div class="t" style="left:745.5px;top:23.84px;font-size:12px;color:#777">favicon</div>
<div class="a" style="left:983px;top:15.8px;width:65px;height:23px;background:#e0453d;border-radius:3px"></div>
<div class="t" style="left:991px;top:20.75px;font-size:14px;color:#fff;-webkit-text-stroke:0.4px #fff">Blocked</div>
<svg class="a" style="left:980px;top:69px" width="20" height="22" viewBox="0 0 20 22"><g fill="none" stroke="#9a9a9a" stroke-width="1.35" stroke-linecap="round"><path d="M12.5 6.9L6.0 13.4A1.48 1.48 0 0 0 8.1 15.5L16.3 7.3A2.7 2.7 0 0 0 12.3 3.6L1.9 14.0A4.31 4.31 0 0 0 8.0 20.1L16.9 11.2"/></g></svg>
<div class="a" style="left:993.3px;top:63.5px;width:13.2px;height:13.2px;background:#555;border-radius:2.5px;box-shadow:0 0 0 1.5px #fff"></div>
<svg class="a" style="left:993.3px;top:63.5px" width="14" height="14" viewBox="0 0 14 14"><path d="M4.7 4.4L7.2 3V11" fill="none" stroke="#fff" stroke-width="1.3" stroke-linejoin="round"/></svg>
<svg class="a" style="left:1018px;top:72px" width="20" height="20" viewBox="0 0 20 20"><path d="M1.95 1.75H18.85V13.95H9.5L5.2 18.6L4.3 13.95H1.95Z" fill="none" stroke="#9a9a9a" stroke-width="1.5" stroke-linejoin="round"/><path d="M5 5.5H12.9M5 9.4H9.1" stroke="#9a9a9a" stroke-width="1.5"/></svg>
<div class="a" style="left:1032.6px;top:63.5px;width:13.2px;height:13.2px;background:#555;border-radius:2.5px;box-shadow:0 0 0 1.5px #fff"></div>
<svg class="a" style="left:1032.6px;top:63.5px" width="14" height="14" viewBox="0 0 14 14"><path d="M4.7 4.4L7.2 3V11" fill="none" stroke="#fff" stroke-width="1.3" stroke-linejoin="round"/></svg>
</div>
<div class="a" style="left:16px;top:504px;width:1066px;height:123px;background:#fff;border:1px solid #ebebeb;border-radius:4px">
<svg class="a" style="left:12.00px;top:5.00px;filter:blur(0.5px)" width="274" height="40"><rect x="2.00" y="2.00" width="9.30" height="9.30" fill="#fafafa"/><rect x="11.00" y="2.00" width="9.30" height="9.30" fill="#f4f4f4"/><rect x="20.00" y="2.00" width="9.30" height="9.30" fill="#f7f7f7"/><rect x="29.00" y="2.00" width="9.30" height="9.30" fill="#f6f6f6"/><rect x="38.00" y="2.00" width="9.30" height="9.30" fill="#f8f8f8"/><rect x="47.00" y="2.00" width="9.30" height="9.30" fill="#f5f5f5"/><rect x="56.00" y="2.00" width="9.30" height="9.30" fill="#f8f8f8"/><rect x="65.00" y="2.00" width="9.30" height="9.30" fill="#f5f5f5"/><rect x="74.00" y="2.00" width="9.30" height="9.30" fill="#f6f6f6"/><rect x="83.00" y="2.00" width="9.30" height="9.30" fill="#f8f8f8"/><rect x="92.00" y="2.00" width="9.30" height="9.30" fill="#f8f8f8"/><rect x="101.00" y="2.00" width="9.30" height="9.30" fill="#f7f7f7"/><rect x="110.00" y="2.00" width="9.30" height="9.30" fill="#f8f8f8"/><rect x="119.00" y="2.00" width="9.30" height="9.30" fill="#f6f6f6"/><rect x="128.00" y="2.00" width="9.30" height="9.30" fill="#f6f6f6"/><rect x="137.00" y="2.00" width="9.30" height="9.30" fill="#f8f8f8"/><rect x="146.00" y="2.00" width="9.30" height="9.30" fill="#f5f5f5"/><rect x="155.00" y="2.00" width="9.30" height="9.30" fill="#f5f5f5"/><rect x="164.00" y="2.00" width="9.30" height="9.30" fill="#f6f6f6"/><rect x="173.00" y="2.00" width="9.30" height="9.30" fill="#f6f6f6"/><rect x="182.00" y="2.00" width="9.30" height="9.30" fill="#f5f5f5"/><rect x="191.00" y="2.00" width="9.30" height="9.30" fill="#f4f4f4"/><rect x="200.00" y="2.00" width="9.30" height="9.30" fill="#f8f8f8"/><rect x="209.00" y="2.00" width="9.30" height="9.30" fill="#f7f7f7"/><rect x="218.00" y="2.00" width="9.30" height="9.30" fill="#f5f5f5"/><rect x="227.00" y="2.00" width="9.30" height="9.30" fill="#f6f6f6"/><rect x="236.00" y="2.00" width="9.30" height="9.30" fill="#f7f7f7"/><rect x="245.00" y="2.00" width="9.30" height="9.30" fill="#f5f5f5"/><rect x="254.00" y="2.00" width="9.30" height="9.30" fill="#f5f5f5"/><rect x="263.00" y="2.00" width="9.30" height="9.30" fill="#fefefe"/><rect x="2.00" y="11.00" width="9.30" height="9.30" fill="#f5f5f5"/><rect x="11.00" y="11.00" width="9.30" height="9.30" fill="#dadada"/><rect x="20.00" y="11.00" width="9.30" height="9.30" fill="#dcdcdc"/><rect x="29.00" y="11.00" width="9.30" height="9.30" fill="#dbdbdb"/><rect x="38.00" y="11.00" width="9.30" height="9.30" fill="#e0e0e0"/><rect x="47.00" y="11.00" width="9.30" height="9.30" fill="#dbdbdb"/><rect x="56.00" y="11.00" width="9.30" height="9.30" fill="#dfdfdf"/><rect x="65.00" y="11.00" width="9.30" height="9.30" fill="#dcdcdc"/><rect x="74.00" y="11.00" width="9.30" height="9.30" fill="#dcdcdc"/><rect x="83.00" y="11.00" width="9.30" height="9.30" fill="#e0e0e0"/><rect x="92.00" y="11.00" width="9.30" height="9.30" fill="#dfdfdf"/><rect x="101.00" y="11.00" width="9.30" height="9.30" fill="#e0e0e0"/><rect x="110.00" y="11.00" width="9.30" height="9.30" fill="#dcdcdc"/><rect x="119.00" y="11.00" width="9.30" height="9.30" fill="#dedede"/><rect x="128.00" y="11.00" width="9.30" height="9.30" fill="#dbdbdb"/><rect x="137.00" y="11.00" width="9.30" height="9.30" fill="#d8d8d8"/><rect x="146.00" y="11.00" width="9.30" height="9.30" fill="#e0e0e0"/><rect x="155.00" y="11.00" width="9.30" height="9.30" fill="#dddddd"/><rect x="164.00" y="11.00" width="9.30" height="9.30" fill="#dddddd"/><rect x="173.00" y="11.00" width="9.30" height="9.30" fill="#dddddd"/><rect x="182.00" y="11.00" width="9.30" height="9.30" fill="#dedede"/><rect x="191.00" y="11.00" width="9.30" height="9.30" fill="#dedede"/><rect x="200.00" y="11.00" width="9.30" height="9.30" fill="#dddddd"/><rect x="209.00" y="11.00" width="9.30" height="9.30" fill="#dfdfdf"/><rect x="218.00" y="11.00" width="9.30" height="9.30" fill="#e1e1e1"/><rect x="227.00" y="11.00" width="9.30" height="9.30" fill="#e0e0e0"/><rect x="236.00" y="11.00" width="9.30" height="9.30" fill="#dedede"/><rect x="245.00" y="11.00" width="9.30" height="9.30" fill="#e0e0e0"/><rect x="254.00" y="11.00" width="9.30" height="9.30" fill="#dbdbdb"/><rect x="263.00" y="11.00" width="9.30" height="9.30" fill="#f6f6f6"/><rect x="2.00" y="20.00" width="9.30" height="9.30" fill="#ececec"/><rect x="11.00" y="20.00" width="9.30" height="9.30" fill="#cccccc"/><rect x="20.00" y="20.00" width="9.30" height="9.30" fill="#d3d3d3"/><rect x="29.00" y="20.00" width="9.30" height="9.30" fill="#d1d1d1"/><rect x="38.00" y="20.00" width="9.30" height="9.30" fill="#d5d5d5"/><rect x="47.00" y="20.00" width="9.30" height="9.30" fill="#d0d0d0"/><rect x="56.00" y="20.00" width="9.30" height="9.30" fill="#d1d1d1"/><rect x="65.00" y="20.00" width="9.30" height="9.30" fill="#cacaca"/><rect x="74.00" y="20.00" width="9.30" height="9.30" fill="#cfcfcf"/><rect x="83.00" y="20.00" width="9.30" height="9.30" fill="#cdcdcd"/><rect x="92.00" y="20.00" width="9.30" height="9.30" fill="#d1d1d1"/><rect x="101.00" y="20.00" width="9.30" height="9.30" fill="#cccccc"/><rect x="110.00" y="20.00" width="9.30" height="9.30" fill="#cecece"/><rect x="119.00" y="20.00" width="9.30" height="9.30" fill="#cdcdcd"/><rect x="128.00" y="20.00" width="9.30" height="9.30" fill="#d2d2d2"/><rect x="137.00" y="20.00" width="9.30" height="9.30" fill="#cbcbcb"/><rect x="146.00" y="20.00" width="9.30" height="9.30" fill="#cfcfcf"/><rect x="155.00" y="20.00" width="9.30" height="9.30" fill="#d2d2d2"/><rect x="164.00" y="20.00" width="9.30" height="9.30" fill="#d3d3d3"/><rect x="173.00" y="20.00" width="9.30" height="9.30" fill="#d0d0d0"/><rect x="182.00" y="20.00" width="9.30" height="9.30" fill="#cbcbcb"/><rect x="191.00" y="20.00" width="9.30" height="9.30" fill="#d1d1d1"/><rect x="200.00" y="20.00" width="9.30" height="9.30" fill="#d2d2d2"/><rect x="209.00" y="20.00" width="9.30" height="9.30" fill="#cdcdcd"/><rect x="218.00" y="20.00" width="9.30" height="9.30" fill="#d1d1d1"/><rect x="227.00" y="20.00" width="9.30" height="9.30" fill="#cbcbcb"/><rect x="236.00" y="20.00" width="9.30" height="9.30" fill="#d2d2d2"/><rect x="245.00" y="20.00" width="9.30" height="9.30" fill="#cfcfcf"/><rect x="254.00" y="20.00" width="9.30" height="9.30" fill="#cecece"/><rect x="263.00" y="20.00" width="9.30" height="9.30" fill="#f2f2f2"/><rect x="2.00" y="29.00" width="9.30" height="9.30" fill="#f6f6f6"/><rect x="11.00" y="29.00" width="9.30" height="9.30" fill="#e8e8e8"/><rect x="20.00" y="29.00" width="9.30" height="9.30" fill="#e7e7e7"/><rect x="29.00" y="29.00" width="9.30" height="9.30" fill="#e9e9e9"/><rect x="38.00" y="29.00" width="9.30" height="9.30" fill="#e8e8e8"/><rect x="47.00" y="29.00" width="9.30" height="9.30" fill="#e9e9e9"/><rect x="56.00" y="29.00" width="9.30" height="9.30" fill="#eeeeee"/><rect x="65.00" y="29.00" width="9.30" height="9.30" fill="#f0f0f0"/><rect x="74.00" y="29.00" width="9.30" height="9.30" fill="#e7e7e7"/><rect x="83.00" y="29.00" width="9.30" height="9.30" fill="#ececec"/><rect x="92.00" y="29.00" width="9.30" height="9.30" fill="#eeeeee"/><rect x="101.00" y="29.00" width="9.30" height="9.30" fill="#f0f0f0"/><rect x="110.00" y="29.00" width="9.30" height="9.30" fill="#e6e6e6"/><rect x="119.00" y="29.00" width="9.30" height="9.30" fill="#ededed"/><rect x="128.00" y="29.00" width="9.30" height="9.30" fill="#e9e9e9"/><rect x="137.00" y="29.00" width="9.30" height="9.30" fill="#ededed"/><rect x="146.00" y="29.00" width="9.30" height="9.30" fill="#ededed"/><rect x="155.00" y="29.00" width="9.30" height="9.30" fill="#e5e5e5"/><rect x="164.00" y="29.00" width="9.30" height="9.30" fill="#ebebeb"/><rect x="173.00" y="29.00" width="9.30" height="9.30" fill="#e9e9e9"/><rect x="182.00" y="29.00" width="9.30" height="9.30" fill="#e8e8e8"/><rect x="191.00" y="29.00" width="9.30" height="9.30" fill="#ececec"/><rect x="200.00" y="29.00" width="9.30" height="9.30" fill="#f1f1f1"/><rect x="209.00" y="29.00" width="9.30" height="9.30" fill="#efefef"/><rect x="218.00" y="29.00" width="9.30" height="9.30" fill="#eaeaea"/><rect x="227.00" y="29.00" width="9.30" height="9.30" fill="#eeeeee"/><rect x="236.00" y="29.00" width="9.30" height="9.30" fill="#ededed"/><rect x="245.00" y="29.00" width="9.30" height="9.30" fill="#e7e7e7"/><rect x="254.00" y="29.00" width="9.30" height="9.30" fill="#ececec"/><rect x="263.00" y="29.00" width="9.30" height="9.30" fill="#fafafa"/></svg>
<div class="t" style="left:354.7px;top:17.74px;font-size:12px;color:#969696">Впервые создан</div>
<div class="t" style="left:354.7px;top:35.95px;font-size:14px;color:#3a3a3a;letter-spacing:-0.2px">07 июля 2022, 17:20</div>
<div class="t" style="left:507.5px;top:17.74px;font-size:12px;color:#969696">Источник</div>
<div class="t" style="left:507.5px;top:35.95px;font-size:14px;color:#3a3a3a;letter-spacing:-0.3px">bp_demo Targeted Thr...</div>
<div class="a" style="left:670px;top:15.5px;width:62px;height:28px;background:#fff;border:1px solid #e6e6e6;border-radius:3px"></div>
<div class="t" style="left:678.5px;top:23.84px;font-size:12px;color:#777">malware</div>
<div class="a" style="left:963px;top:15.8px;width:85px;height:23px;background:#1a94d2;border-radius:3px"></div>
<div class="t" style="left:971px;top:20.75px;font-size:14px;color:#fff;-webkit-text-stroke:0.4px #fff">In progress</div>
</div>
<div class="a" style="left:1082px;top:0px;width:10px;height:547px;background:#fafafa;border-left:1px solid #ececec;border-right:1px solid #ececec"></div>
<div class="a" style="left:1085px;top:18px;width:5px;height:319px;background:#c4c4c4;border-radius:3px"></div>
</div>
<svg class="a" style="left:1228px;top:276px" width="11" height="15" viewBox="0 0 11 15"><path d="M1.5 1L9 7.5L1.5 14" fill="none" stroke="#8c8c8c" stroke-width="1.6"/></svg>
<svg class="a" style="left:1249.00px;top:259.00px;filter:blur(0.5px)" width="301" height="49"><rect x="2.00" y="2.00" width="9.30" height="9.30" fill="#ffffff"/><rect x="11.00" y="2.00" width="9.30" height="9.30" fill="#fdfdfd"/><rect x="20.00" y="2.00" width="9.30" height="9.30" fill="#fcfcfc"/><rect x="29.00" y="2.00" width="9.30" height="9.30" fill="#fbfbfb"/><rect x="38.00" y="2.00" width="9.30" height="9.30" fill="#fcfcfc"/><rect x="47.00" y="2.00" width="9.30" height="9.30" fill="#fdfdfd"/><rect x="56.00" y="2.00" width="9.30" height="9.30" fill="#fafafa"/><rect x="65.00" y="2.00" width="9.30" height="9.30" fill="#fdfdfd"/><rect x="74.00" y="2.00" width="9.30" height="9.30" fill="#f9f9f9"/><rect x="83.00" y="2.00" width="9.30" height="9.30" fill="#fcfcfc"/><rect x="92.00" y="2.00" width="9.30" height="9.30" fill="#fdfdfd"/><rect x="101.00" y="2.00" width="9.30" height="9.30" fill="#fcfcfc"/><rect x="110.00" y="2.00" width="9.30" height="9.30" fill="#fdfdfd"/><rect x="119.00" y="2.00" width="9.30" height="9.30" fill="#fafafa"/><rect x="128.00" y="2.00" width="9.30" height="9.30" fill="#fbfbfb"/><rect x="137.00" y="2.00" width="9.30" height="9.30" fill="#fcfcfc"/><rect x="146.00" y="2.00" width="9.30" height="9.30" fill="#fdfdfd"/><rect x="155.00" y="2.00" width="9.30" height="9.30" fill="#fdfdfd"/><rect x="164.00" y="2.00" width="9.30" height="9.30" fill="#fcfcfc"/><rect x="173.00" y="2.00" width="9.30" height="9.30" fill="#fbfbfb"/><rect x="182.00" y="2.00" width="9.30" height="9.30" fill="#fcfcfc"/><rect x="191.00" y="2.00" width="9.30" height="9.30" fill="#fafafa"/><rect x="200.00" y="2.00" width="9.30" height="9.30" fill="#fbfbfb"/><rect x="209.00" y="2.00" width="9.30" height="9.30" fill="#f9f9f9"/><rect x="218.00" y="2.00" width="9.30" height="9.30" fill="#fcfcfc"/><rect x="227.00" y="2.00" width="9.30" height="9.30" fill="#fdfdfd"/><rect x="236.00" y="2.00" width="9.30" height="9.30" fill="#fafafa"/><rect x="245.00" y="2.00" width="9.30" height="9.30" fill="#fbfbfb"/><rect x="254.00" y="2.00" width="9.30" height="9.30" fill="#fafafa"/><rect x="263.00" y="2.00" width="9.30" height="9.30" fill="#fbfbfb"/><rect x="272.00" y="2.00" width="9.30" height="9.30" fill="#fcfcfc"/><rect x="281.00" y="2.00" width="9.30" height="9.30" fill="#fbfbfb"/><rect x="290.00" y="2.00" width="9.30" height="9.30" fill="#fefefe"/><rect x="2.00" y="11.00" width="9.30" height="9.30" fill="#f6f6f6"/><rect x="11.00" y="11.00" width="9.30" height="9.30" fill="#eaeaea"/><rect x="20.00" y="11.00" width="9.30" height="9.30" fill="#eeeeee"/><rect x="29.00" y="11.00" width="9.30" height="9.30" fill="#e7e7e7"/><rect x="38.00" y="11.00" width="9.30" height="9.30" fill="#e9e9e9"/><rect x="47.00" y="11.00" width="9.30" height="9.30" fill="#ebebeb"/><rect x="56.00" y="11.00" width="9.30" height="9.30" fill="#efefef"/><rect x="65.00" y="11.00" width="9.30" height="9.30" fill="#f0f0f0"/><rect x="74.00" y="11.00" width="9.30" height="9.30" fill="#ededed"/><rect x="83.00" y="11.00" width="9.30" height="9.30" fill="#efefef"/><rect x="92.00" y="11.00" width="9.30" height="9.30" fill="#eaeaea"/><rect x="101.00" y="11.00" width="9.30" height="9.30" fill="#efefef"/><rect x="110.00" y="11.00" width="9.30" height="9.30" fill="#e8e8e8"/><rect x="119.00" y="11.00" width="9.30" height="9.30" fill="#e6e6e6"/><rect x="128.00" y="11.00" width="9.30" height="9.30" fill="#ededed"/><rect x="137.00" y="11.00" width="9.30" height="9.30" fill="#eaeaea"/><rect x="146.00" y="11.00" width="9.30" height="9.30" fill="#e8e8e8"/><rect x="155.00" y="11.00" width="9.30" height="9.30" fill="#efefef"/><rect x="164.00" y="11.00" width="9.30" height="9.30" fill="#ededed"/><rect x="173.00" y="11.00" width="9.30" height="9.30" fill="#ebebeb"/><rect x="182.00" y="11.00" width="9.30" height="9.30" fill="#f0f0f0"/><rect x="191.00" y="11.00" width="9.30" height="9.30" fill="#ebebeb"/><rect x="200.00" y="11.00" width="9.30" height="9.30" fill="#e5e5e5"/><rect x="209.00" y="11.00" width="9.30" height="9.30" fill="#eaeaea"/><rect x="218.00" y="11.00" width="9.30" height="9.30" fill="#ebebeb"/><rect x="227.00" y="11.00" width="9.30" height="9.30" fill="#e6e6e6"/><rect x="236.00" y="11.00" width="9.30" height="9.30" fill="#e6e6e6"/><rect x="245.00" y="11.00" width="9.30" height="9.30" fill="#ececec"/><rect x="254.00" y="11.00" width="9.30" height="9.30" fill="#eeeeee"/><rect x="263.00" y="11.00" width="9.30" height="9.30" fill="#f1f1f1"/><rect x="272.00" y="11.00" width="9.30" height="9.30" fill="#efefef"/><rect x="281.00" y="11.00" width="9.30" height="9.30" fill="#eeeeee"/><rect x="290.00" y="11.00" width="9.30" height="9.30" fill="#fafafa"/><rect x="2.00" y="20.00" width="9.30" height="9.30" fill="#f2f2f2"/><rect x="11.00" y="20.00" width="9.30" height="9.30" fill="#d1d1d1"/><rect x="20.00" y="20.00" width="9.30" height="9.30" fill="#cfcfcf"/><rect x="29.00" y="20.00" width="9.30" height="9.30" fill="#d2d2d2"/><rect x="38.00" y="20.00" width="9.30" height="9.30" fill="#d2d2d2"/><rect x="47.00" y="20.00" width="9.30" height="9.30" fill="#c9c9c9"/><rect x="56.00" y="20.00" width="9.30" height="9.30" fill="#cfcfcf"/><rect x="65.00" y="20.00" width="9.30" height="9.30" fill="#d4d4d4"/><rect x="74.00" y="20.00" width="9.30" height="9.30" fill="#d1d1d1"/><rect x="83.00" y="20.00" width="9.30" height="9.30" fill="#cdcdcd"/><rect x="92.00" y="20.00" width="9.30" height="9.30" fill="#d1d1d1"/><rect x="101.00" y="20.00" width="9.30" height="9.30" fill="#d0d0d0"/><rect x="110.00" y="20.00" width="9.30" height="9.30" fill="#d1d1d1"/><rect x="119.00" y="20.00" width="9.30" height="9.30" fill="#cccccc"/><rect x="128.00" y="20.00" width="9.30" height="9.30" fill="#cacaca"/><rect x="137.00" y="20.00" width="9.30" height="9.30" fill="#d1d1d1"/><rect x="146.00" y="20.00" width="9.30" height="9.30" fill="#d0d0d0"/><rect x="155.00" y="20.00" width="9.30" height="9.30" fill="#cdcdcd"/><rect x="164.00" y="20.00" width="9.30" height="9.30" fill="#d2d2d2"/><rect x="173.00" y="20.00" width="9.30" height="9.30" fill="#c9c9c9"/><rect x="182.00" y="20.00" width="9.30" height="9.30" fill="#cacaca"/><rect x="191.00" y="20.00" width="9.30" height="9.30" fill="#cacaca"/><rect x="200.00" y="20.00" width="9.30" height="9.30" fill="#d1d1d1"/><rect x="209.00" y="20.00" width="9.30" height="9.30" fill="#d2d2d2"/><rect x="218.00" y="20.00" width="9.30" height="9.30" fill="#d4d4d4"/><rect x="227.00" y="20.00" width="9.30" height="9.30" fill="#d0d0d0"/><rect x="236.00" y="20.00" width="9.30" height="9.30" fill="#cbcbcb"/><rect x="245.00" y="20.00" width="9.30" height="9.30" fill="#c8c8c8"/><rect x="254.00" y="20.00" width="9.30" height="9.30" fill="#cbcbcb"/><rect x="263.00" y="20.00" width="9.30" height="9.30" fill="#d3d3d3"/><rect x="272.00" y="20.00" width="9.30" height="9.30" fill="#d3d3d3"/><rect x="281.00" y="20.00" width="9.30" height="9.30" fill="#cbcbcb"/><rect x="290.00" y="20.00" width="9.30" height="9.30" fill="#ebebeb"/><rect x="2.00" y="29.00" width="9.30" height="9.30" fill="#f6f6f6"/><rect x="11.00" y="29.00" width="9.30" height="9.30" fill="#eeeeee"/><rect x="20.00" y="29.00" width="9.30" height="9.30" fill="#e5e5e5"/><rect x="29.00" y="29.00" width="9.30" height="9.30" fill="#e8e8e8"/><rect x="38.00" y="29.00" width="9.30" height="9.30" fill="#ececec"/><rect x="47.00" y="29.00" width="9.30" height="9.30" fill="#ebebeb"/><rect x="56.00" y="29.00" width="9.30" height="9.30" fill="#e7e7e7"/><rect x="65.00" y="29.00" width="9.30" height="9.30" fill="#e9e9e9"/><rect x="74.00" y="29.00" width="9.30" height="9.30" fill="#eaeaea"/><rect x="83.00" y="29.00" width="9.30" height="9.30" fill="#f0f0f0"/><rect x="92.00" y="29.00" width="9.30" height="9.30" fill="#e5e5e5"/><rect x="101.00" y="29.00" width="9.30" height="9.30" fill="#ececec"/><rect x="110.00" y="29.00" width="9.30" height="9.30" fill="#e5e5e5"/><rect x="119.00" y="29.00" width="9.30" height="9.30" fill="#ececec"/><rect x="128.00" y="29.00" width="9.30" height="9.30" fill="#f0f0f0"/><rect x="137.00" y="29.00" width="9.30" height="9.30" fill="#e6e6e6"/><rect x="146.00" y="29.00" width="9.30" height="9.30" fill="#e8e8e8"/><rect x="155.00" y="29.00" width="9.30" height="9.30" fill="#e9e9e9"/><rect x="164.00" y="29.00" width="9.30" height="9.30" fill="#e9e9e9"/><rect x="173.00" y="29.00" width="9.30" height="9.30" fill="#eeeeee"/><rect x="182.00" y="29.00" width="9.30" height="9.30" fill="#ededed"/><rect x="191.00" y="29.00" width="9.30" height="9.30" fill="#ededed"/><rect x="200.00" y="29.00" width="9.30" height="9.30" fill="#ececec"/><rect x="209.00" y="29.00" width="9.30" height="9.30" fill="#ececec"/><rect x="218.00" y="29.00" width="9.30" height="9.30" fill="#e8e8e8"/><rect x="227.00" y="29.00" width="9.30" height="9.30" fill="#e9e9e9"/><rect x="236.00" y="29.00" width="9.30" height="9.30" fill="#eaeaea"/><rect x="245.00" y="29.00" width="9.30" height="9.30" fill="#ededed"/><rect x="254.00" y="29.00" width="9.30" height="9.30" fill="#ededed"/><rect x="263.00" y="29.00" width="9.30" height="9.30" fill="#eeeeee"/><rect x="272.00" y="29.00" width="9.30" height="9.30" fill="#eeeeee"/><rect x="281.00" y="29.00" width="9.30" height="9.30" fill="#e8e8e8"/><rect x="290.00" y="29.00" width="9.30" height="9.30" fill="#f8f8f8"/><rect x="2.00" y="38.00" width="9.30" height="9.30" fill="#fcfcfc"/><rect x="11.00" y="38.00" width="9.30" height="9.30" fill="#fbfbfb"/><rect x="20.00" y="38.00" width="9.30" height="9.30" fill="#fcfcfc"/><rect x="29.00" y="38.00" width="9.30" height="9.30" fill="#fbfbfb"/><rect x="38.00" y="38.00" width="9.30" height="9.30" fill="#fafafa"/><rect x="47.00" y="38.00" width="9.30" height="9.30" fill="#fbfbfb"/><rect x="56.00" y="38.00" width="9.30" height="9.30" fill="#fbfbfb"/><rect x="65.00" y="38.00" width="9.30" height="9.30" fill="#fafafa"/><rect x="74.00" y="38.00" width="9.30" height="9.30" fill="#fbfbfb"/><rect x="83.00" y="38.00" width="9.30" height="9.30" fill="#f9f9f9"/><rect x="92.00" y="38.00" width="9.30" height="9.30" fill="#f9f9f9"/><rect x="101.00" y="38.00" width="9.30" height="9.30" fill="#fcfcfc"/><rect x="110.00" y="38.00" width="9.30" height="9.30" fill="#f9f9f9"/><rect x="119.00" y="38.00" width="9.30" height="9.30" fill="#fdfdfd"/><rect x="128.00" y="38.00" width="9.30" height="9.30" fill="#fbfbfb"/><rect x="137.00" y="38.00" width="9.30" height="9.30" fill="#fcfcfc"/><rect x="146.00" y="38.00" width="9.30" height="9.30" fill="#fafafa"/><rect x="155.00" y="38.00" width="9.30" height="9.30" fill="#f9f9f9"/><rect x="164.00" y="38.00" width="9.30" height="9.30" fill="#fafafa"/><rect x="173.00" y="38.00" width="9.30" height="9.30" fill="#fdfdfd"/><rect x="182.00" y="38.00" width="9.30" height="9.30" fill="#f9f9f9"/><rect x="191.00" y="38.00" width="9.30" height="9.30" fill="#f9f9f9"/><rect x="200.00" y="38.00" width="9.30" height="9.30" fill="#fbfbfb"/><rect x="209.00" y="38.00" width="9.30" height="9.30" fill="#f9f9f9"/><rect x="218.00" y="38.00" width="9.30" height="9.30" fill="#fcfcfc"/><rect x="227.00" y="38.00" width="9.30" height="9.30" fill="#fcfcfc"/><rect x="236.00" y="38.00" width="9.30" height="9.30" fill="#fcfcfc"/><rect x="245.00" y="38.00" width="9.30" height="9.30" fill="#fefefe"/><rect x="254.00" y="38.00" width="9.30" height="9.30" fill="#fbfbfb"/><rect x="263.00" y="38.00" width="9.30" height="9.30" fill="#fcfcfc"/><rect x="272.00" y="38.00" width="9.30" height="9.30" fill="#fbfbfb"/><rect x="281.00" y="38.00" width="9.30" height="9.30" fill="#f9f9f9"/><rect x="290.00" y="38.00" width="9.30" height="9.30" fill="#fbfbfb"/></svg>
<div class="a" style="left:1265px;top:315px;width:1px;height:485px;background:#ececec"></div>
<div class="a" style="left:1266px;top:370px;width:390px;height:1px;background:#ececec"></div>
<div class="a" style="left:1202px;top:799px;width:1454px;height:1px;background:#ececec"></div>
<svg class="a" style="left:1222px;top:336px" width="21" height="21" viewBox="0 0 21 21"><circle cx="10.5" cy="10.5" r="9.2" fill="none" stroke="#8c8c8c" stroke-width="1.6"/><path d="M10.5 9V15.5" stroke="#8c8c8c" stroke-width="1.8"/><circle cx="10.5" cy="6.3" r="1.1" fill="#8c8c8c"/></svg>
<svg class="a" style="left:1222px;top:399px" width="21" height="21" viewBox="0 0 21 21"><path d="M1.5 1.5H19.5V13H8.5L4.5 18.5V13H1.5Z" fill="none" stroke="#8c8c8c" stroke-width="1.6" stroke-linejoin="round"/><path d="M5 5.5H13M5 8.8H10" stroke="#8c8c8c" stroke-width="1.6"/></svg>
<div class="a" style="left:1213.5px;top:453px;width:39px;height:39px;background:#f0f0f0;border-radius:4px"></div>
<svg class="a" style="left:1223px;top:459px" width="22" height="24" viewBox="0 0 22 24"><g transform="scale(1.04)" fill="none" stroke="#505050" stroke-width="1.5" stroke-linecap="round"><path d="M12.5 6.9L6.0 13.4A1.48 1.48 0 0 0 8.1 15.5L16.3 7.3A2.7 2.7 0 0 0 12.3 3.6L1.9 14.0A4.31 4.31 0 0 0 8.0 20.1L16.9 11.2"/></g></svg>
<div class="a" style="left:1213.5px;top:508px;width:39px;height:1px;background:#e6e6e6"></div>
<svg class="a" style="left:1222px;top:534px" width="21" height="21" viewBox="0 0 21 21"><path d="M3.2 10.5A7.5 7.5 0 1 0 5.4 5.2" fill="none" stroke="#8c8c8c" stroke-width="1.7"/><path d="M1.5 3.5L2.8 9.5L8.3 7.5" fill="none" stroke="#8c8c8c" stroke-width="1.7" stroke-linejoin="round"/><path d="M10.5 6.5V11L13.5 13" fill="none" stroke="#8c8c8c" stroke-width="1.7"/></svg>
<div class="t" style="left:1289px;top:335.48px;font-size:15.5px;color:#333;-webkit-text-stroke:0.4px #333;letter-spacing:0.5px">Вложения</div>
<div class="a" style="left:1382px;top:332px;width:24px;height:23px;background:#f0f0f0;border-radius:3px"></div>
<div class="t" style="left:1390px;top:336.15px;font-size:14px;color:#333">1</div>
<svg class="a" style="left:1610px;top:333px" width="22" height="20" viewBox="0 0 22 20"><path d="M1.5 5.5H6L8 2.5H14L16 5.5H20.5V18H1.5Z" fill="none" stroke="#8c8c8c" stroke-width="1.6" stroke-linejoin="round"/><circle cx="11" cy="11.3" r="3.8" fill="none" stroke="#8c8c8c" stroke-width="1.6"/></svg>
<div class="a" style="left:1289px;top:395px;width:168px;height:189px;background:#fff;border:1px solid #e6e6e6;border-radius:4px"></div>
<div class="a" style="left:1290px;top:443px;width:166px;height:1px;background:#ececec"></div>
<div class="t" style="left:1297.6px;top:412.35px;font-size:14px;color:#333;-webkit-text-stroke:0.4px #333;letter-spacing:-0.25px">a2854a28-488...</div>
<div class="a" style="left:1427px;top:409.8px;width:3.4px;height:3.4px;border-radius:50%;background:#8c8c8c"></div>
<div class="a" style="left:1427px;top:417.3px;width:3.4px;height:3.4px;border-radius:50%;background:#8c8c8c"></div>
<div class="a" style="left:1427px;top:424.8px;width:3.4px;height:3.4px;border-radius:50%;background:#8c8c8c"></div>
<div class="a" style="left:1294px;top:448px;width:158px;height:124px;overflow:hidden" id="thumb"><svg width="158" height="124" viewBox="0 0 158 124" style="display:block;filter:blur(0.45px)"><rect x="0" y="0" width="6.4" height="2.4" fill="#f0e4e0"/><rect x="6" y="0" width="5.4" height="2.4" fill="#eee2dc"/><rect x="11" y="0" width="5.4" height="2.4" fill="#ece4dc"/><rect x="16" y="0" width="5.4" height="2.4" fill="#e8e4d8"/><rect x="21" y="0" width="5.4" height="2.4" fill="#e0e4c8"/><rect x="26" y="0" width="5.4" height="2.4" fill="#d8e0c0"/><rect x="31" y="0" width="5.4" height="2.4" fill="#c8dcb0"/><rect x="36" y="0" width="5.4" height="2.4" fill="#c0d8a8"/><rect x="41" y="0" width="5.4" height="2.4" fill="#b8d4a0"/><rect x="46" y="0" width="5.4" height="2.4" fill="#b0cc98"/><rect x="51" y="0" width="5.4" height="2.4" fill="#a8c098"/><rect x="56" y="0" width="5.4" height="2.4" fill="#a8b8a0"/><rect x="61" y="0" width="5.4" height="2.4" fill="#a8b0a0"/><rect x="66" y="0" width="5.4" height="2.4" fill="#a8aaa4"/><rect x="71" y="0" width="5.4" height="2.4" fill="#aaa8a8"/><rect x="76" y="0" width="5.4" height="2.4" fill="#b0aaa8"/><rect x="81" y="0" width="5.4" height="2.4" fill="#a8a4a4"/><rect x="86" y="0" width="5.4" height="2.4" fill="#a0a0a0"/><rect x="91" y="0" width="5.4" height="2.4" fill="#a0a0a0"/><rect x="96" y="0" width="5.4" height="2.4" fill="#a0a0a0"/><rect x="101" y="0" width="5.4" height="2.4" fill="#a0a0a0"/><rect x="106" y="0" width="5.4" height="2.4" fill="#a0a0a0"/><rect x="111" y="0" width="5.4" height="2.4" fill="#a0a0a0"/><rect x="116" y="0" width="5.4" height="2.4" fill="#a0a0a0"/><rect x="121" y="0" width="5.4" height="2.4" fill="#a0a0a0"/><rect x="126" y="0" width="5.4" height="2.4" fill="#a8b0a0"/><rect x="131" y="0" width="5.4" height="2.4" fill="#c0d0b0"/><rect x="136" y="0" width="5.4" height="2.4" fill="#d8e0d0"/><rect x="141" y="0" width="5.4" height="2.4" fill="#e8e8e0"/><rect x="146" y="0" width="5.4" height="2.4" fill="#f0ece8"/><rect x="151" y="0" width="5.4" height="2.4" fill="#f0ece8"/><rect x="156" y="0" width="2" height="2.4" fill="#f6f4f2"/><rect x="0" y="2" width="6.4" height="5.4" fill="#e8ccc4"/><rect x="6" y="2" width="5.4" height="5.4" fill="#e0c0b8"/><rect x="11" y="2" width="5.4" height="5.4" fill="#dcc8b8"/><rect x="16" y="2" width="5.4" height="5.4" fill="#d8d0b8"/><rect x="21" y="2" width="5.4" height="5.4" fill="#c8cca0"/><rect x="26" y="2" width="5.4" height="5.4" fill="#a8c880"/><rect x="31" y="2" width="5.4" height="5.4" fill="#90c060"/><rect x="36" y="2" width="5.4" height="5.4" fill="#88c068"/><rect x="41" y="2" width="5.4" height="5.4" fill="#78b058"/><rect x="46" y="2" width="5.4" height="5.4" fill="#70a050"/><rect x="51" y="2" width="5.4" height="5.4" fill="#688a58"/><rect x="56" y="2" width="5.4" height="5.4" fill="#607868"/><rect x="61" y="2" width="5.4" height="5.4" fill="#707a70"/><rect x="66" y="2" width="5.4" height="5.4" fill="#806e68"/><rect x="71" y="2" width="5.4" height="5.4" fill="#7a6a68"/><rect x="76" y="2" width="5.4" height="5.4" fill="#908480"/><rect x="81" y="2" width="5.4" height="5.4" fill="#887078"/><rect x="86" y="2" width="5.4" height="5.4" fill="#706878"/><rect x="91" y="2" width="5.4" height="5.4" fill="#585860"/><rect x="96" y="2" width="5.4" height="5.4" fill="#505050"/><rect x="101" y="2" width="5.4" height="5.4" fill="#505050"/><rect x="106" y="2" width="5.4" height="5.4" fill="#505050"/><rect x="111" y="2" width="5.4" height="5.4" fill="#505450"/><rect x="116" y="2" width="5.4" height="5.4" fill="#585c58"/><rect x="121" y="2" width="5.4" height="5.4" fill="#607060"/><rect x="126" y="2" width="5.4" height="5.4" fill="#688a60"/><rect x="131" y="2" width="5.4" height="5.4" fill="#88b070"/><rect x="136" y="2" width="5.4" height="5.4" fill="#a8c888"/><rect x="141" y="2" width="5.4" height="5.4" fill="#c8d8b0"/><rect x="146" y="2" width="5.4" height="5.4" fill="#e0e0d0"/><rect x="151" y="2" width="5.4" height="5.4" fill="#e8e0d8"/><rect x="156" y="2" width="2" height="5.4" fill="#f2ede9"/><rect x="0" y="7" width="6.4" height="5.4" fill="#e0c0b0"/><rect x="6" y="7" width="5.4" height="5.4" fill="#d0b898"/><rect x="11" y="7" width="5.4" height="5.4" fill="#c8c090"/><rect x="16" y="7" width="5.4" height="5.4" fill="#b0c080"/><rect x="21" y="7" width="5.4" height="5.4" fill="#98b860"/><rect x="26" y="7" width="5.4" height="5.4" fill="#80b048"/><rect x="31" y="7" width="5.4" height="5.4" fill="#68a838"/><rect x="36" y="7" width="5.4" height="5.4" fill="#58a030"/><rect x="41" y="7" width="5.4" height="5.4" fill="#509028"/><rect x="46" y="7" width="5.4" height="5.4" fill="#407028"/><rect x="51" y="7" width="5.4" height="5.4" fill="#304820"/><rect x="56" y="7" width="5.4" height="5.4" fill="#284030"/><rect x="61" y="7" width="5.4" height="5.4" fill="#406050"/><rect x="66" y="7" width="5.4" height="5.4" fill="#607058"/><rect x="71" y="7" width="5.4" height="5.4" fill="#806858"/><rect x="76" y="7" width="5.4" height="5.4" fill="#806858"/><rect x="81" y="7" width="5.4" height="5.4" fill="#806068"/><rect x="86" y="7" width="5.4" height="5.4" fill="#605068"/><rect x="91" y="7" width="5.4" height="5.4" fill="#383038"/><rect x="96" y="7" width="5.4" height="5.4" fill="#202020"/><rect x="101" y="7" width="5.4" height="5.4" fill="#1c1c1c"/><rect x="106" y="7" width="5.4" height="5.4" fill="#202820"/><rect x="111" y="7" width="5.4" height="5.4" fill="#202c18"/><rect x="116" y="7" width="5.4" height="5.4" fill="#284820"/><rect x="121" y="7" width="5.4" height="5.4" fill="#386820"/><rect x="126" y="7" width="5.4" height="5.4" fill="#488a28"/><rect x="131" y="7" width="5.4" height="5.4" fill="#58a830"/><rect x="136" y="7" width="5.4" height="5.4" fill="#70b848"/><rect x="141" y="7" width="5.4" height="5.4" fill="#98c870"/><rect x="146" y="7" width="5.4" height="5.4" fill="#c0d0a8"/><rect x="151" y="7" width="5.4" height="5.4" fill="#e0d8c8"/><rect x="156" y="7" width="2" height="5.4" fill="#ede9e0"/><rect x="0" y="12" width="6.4" height="5.4" fill="#d8c8a8"/><rect x="6" y="12" width="5.4" height="5.4" fill="#b8b080"/><rect x="11" y="12" width="5.4" height="5.4" fill="#a8b870"/><rect x="16" y="12" width="5.4" height="5.4" fill="#90b058"/><rect x="21" y="12" width="5.4" height="5.4" fill="#70a840"/><rect x="26" y="12" width="5.4" height="5.4" fill="#58a028"/><rect x="31" y="12" width="5.4" height="5.4" fill="#489020"/><rect x="36" y="12" width="5.4" height="5.4" fill="#387818"/><rect x="41" y="12" width="5.4" height="5.4" fill="#285818"/><rect x="46" y="12" width="5.4" height="5.4" fill="#1a3810"/><rect x="51" y="12" width="5.4" height="5.4" fill="#101c10"/><rect x="56" y="12" width="5.4" height="5.4" fill="#101810"/><rect x="61" y="12" width="5.4" height="5.4" fill="#183028"/><rect x="66" y="12" width="5.4" height="5.4" fill="#405848"/><rect x="71" y="12" width="5.4" height="5.4" fill="#606050"/><rect x="76" y="12" width="5.4" height="5.4" fill="#806850"/><rect x="81" y="12" width="5.4" height="5.4" fill="#705858"/><rect x="86" y="12" width="5.4" height="5.4" fill="#504050"/><rect x="91" y="12" width="5.4" height="5.4" fill="#282830"/><rect x="96" y="12" width="5.4" height="5.4" fill="#101410"/><rect x="101" y="12" width="5.4" height="5.4" fill="#101a08"/><rect x="106" y="12" width="5.4" height="5.4" fill="#183010"/><rect x="111" y="12" width="5.4" height="5.4" fill="#205818"/><rect x="116" y="12" width="5.4" height="5.4" fill="#307818"/><rect x="121" y="12" width="5.4" height="5.4" fill="#409818"/><rect x="126" y="12" width="5.4" height="5.4" fill="#48a818"/><rect x="131" y="12" width="5.4" height="5.4" fill="#50b020"/><rect x="136" y="12" width="5.4" height="5.4" fill="#60b838"/><rect x="141" y="12" width="5.4" height="5.4" fill="#80c050"/><rect x="146" y="12" width="5.4" height="5.4" fill="#a8c890"/><rect x="151" y="12" width="5.4" height="5.4" fill="#d0d0b8"/><rect x="156" y="12" width="2" height="5.4" fill="#e5e5d7"/><rect x="0" y="17" width="6.4" height="5.4" fill="#c8d0a0"/><rect x="6" y="17" width="5.4" height="5.4" fill="#98b060"/><rect x="11" y="17" width="5.4" height="5.4" fill="#78a840"/><rect x="16" y="17" width="5.4" height="5.4" fill="#60a030"/><rect x="21" y="17" width="5.4" height="5.4" fill="#489020"/><rect x="26" y="17" width="5.4" height="5.4" fill="#387818"/><rect x="31" y="17" width="5.4" height="5.4" fill="#285a18"/><rect x="36" y="17" width="5.4" height="5.4" fill="#1a4010"/><rect x="41" y="17" width="5.4" height="5.4" fill="#102808"/><rect x="46" y="17" width="5.4" height="5.4" fill="#0c1808"/><rect x="51" y="17" width="5.4" height="5.4" fill="#080c08"/><rect x="56" y="17" width="5.4" height="5.4" fill="#0a0c0a"/><rect x="61" y="17" width="5.4" height="5.4" fill="#141a14"/><rect x="66" y="17" width="5.4" height="5.4" fill="#283028"/><rect x="71" y="17" width="5.4" height="5.4" fill="#383828"/><rect x="76" y="17" width="5.4" height="5.4" fill="#403830"/><rect x="81" y="17" width="5.4" height="5.4" fill="#383030"/><rect x="86" y="17" width="5.4" height="5.4" fill="#282828"/><rect x="91" y="17" width="5.4" height="5.4" fill="#182018"/><rect x="96" y="17" width="5.4" height="5.4" fill="#102810"/><rect x="101" y="17" width="5.4" height="5.4" fill="#204818"/><rect x="106" y="17" width="5.4" height="5.4" fill="#306818"/><rect x="111" y="17" width="5.4" height="5.4" fill="#408818"/><rect x="116" y="17" width="5.4" height="5.4" fill="#50a020"/><rect x="121" y="17" width="5.4" height="5.4" fill="#58a828"/><rect x="126" y="17" width="5.4" height="5.4" fill="#58a830"/><rect x="131" y="17" width="5.4" height="5.4" fill="#58a830"/><rect x="136" y="17" width="5.4" height="5.4" fill="#58a838"/><rect x="141" y="17" width="5.4" height="5.4" fill="#60b040"/><rect x="146" y="17" width="5.4" height="5.4" fill="#90c070"/><rect x="151" y="17" width="5.4" height="5.4" fill="#b0c898"/><rect x="156" y="17" width="2" height="5.4" fill="#d3e0c6"/><rect x="0" y="22" width="6.4" height="5.4" fill="#a8c880"/><rect x="6" y="22" width="5.4" height="5.4" fill="#68a840"/><rect x="11" y="22" width="5.4" height="5.4" fill="#509830"/><rect x="16" y="22" width="5.4" height="5.4" fill="#408820"/><rect x="21" y="22" width="5.4" height="5.4" fill="#307018"/><rect x="26" y="22" width="5.4" height="5.4" fill="#285018"/><rect x="31" y="22" width="5.4" height="5.4" fill="#1a3810"/><rect x="36" y="22" width="5.4" height="5.4" fill="#102408"/><rect x="41" y="22" width="5.4" height="5.4" fill="#0a1808"/><rect x="46" y="22" width="5.4" height="5.4" fill="#0c140a"/><rect x="51" y="22" width="5.4" height="5.4" fill="#0e160e"/><rect x="56" y="22" width="5.4" height="5.4" fill="#10180e"/><rect x="61" y="22" width="5.4" height="5.4" fill="#141c14"/><rect x="66" y="22" width="5.4" height="5.4" fill="#182018"/><rect x="71" y="22" width="5.4" height="5.4" fill="#1a2418"/><rect x="76" y="22" width="5.4" height="5.4" fill="#181c18"/><rect x="81" y="22" width="5.4" height="5.4" fill="#181c18"/><rect x="86" y="22" width="5.4" height="5.4" fill="#182818"/><rect x="91" y="22" width="5.4" height="5.4" fill="#183818"/><rect x="96" y="22" width="5.4" height="5.4" fill="#205818"/><rect x="101" y="22" width="5.4" height="5.4" fill="#307818"/><rect x="106" y="22" width="5.4" height="5.4" fill="#409820"/><rect x="111" y="22" width="5.4" height="5.4" fill="#50a820"/><rect x="116" y="22" width="5.4" height="5.4" fill="#58a830"/><rect x="121" y="22" width="5.4" height="5.4" fill="#60a840"/><rect x="126" y="22" width="5.4" height="5.4" fill="#609858"/><rect x="131" y="22" width="5.4" height="5.4" fill="#609060"/><rect x="136" y="22" width="5.4" height="5.4" fill="#609868"/><rect x="141" y="22" width="5.4" height="5.4" fill="#58a840"/><rect x="146" y="22" width="5.4" height="5.4" fill="#50b038"/><rect x="151" y="22" width="5.4" height="5.4" fill="#70c058"/><rect x="156" y="22" width="2" height="5.4" fill="#b0dca3"/><rect x="0" y="27" width="6.4" height="5.4" fill="#90c070"/><rect x="6" y="27" width="5.4" height="5.4" fill="#509030"/><rect x="11" y="27" width="5.4" height="5.4" fill="#307020"/><rect x="16" y="27" width="5.4" height="5.4" fill="#285a18"/><rect x="21" y="27" width="5.4" height="5.4" fill="#205018"/><rect x="26" y="27" width="5.4" height="5.4" fill="#1a4818"/><rect x="31" y="27" width="5.4" height="5.4" fill="#184018"/><rect x="36" y="27" width="5.4" height="5.4" fill="#183c18"/><rect x="41" y="27" width="5.4" height="5.4" fill="#183c18"/><rect x="46" y="27" width="5.4" height="5.4" fill="#183c18"/><rect x="51" y="27" width="5.4" height="5.4" fill="#184018"/><rect x="56" y="27" width="5.4" height="5.4" fill="#184018"/><rect x="61" y="27" width="5.4" height="5.4" fill="#184018"/><rect x="66" y="27" width="5.4" height="5.4" fill="#1a4018"/><rect x="71" y="27" width="5.4" height="5.4" fill="#1a4818"/><rect x="76" y="27" width="5.4" height="5.4" fill="#184018"/><rect x="81" y="27" width="5.4" height="5.4" fill="#184818"/><rect x="86" y="27" width="5.4" height="5.4" fill="#206020"/><rect x="91" y="27" width="5.4" height="5.4" fill="#287828"/><rect x="96" y="27" width="5.4" height="5.4" fill="#309028"/><rect x="101" y="27" width="5.4" height="5.4" fill="#40a828"/><rect x="106" y="27" width="5.4" height="5.4" fill="#48b028"/><rect x="111" y="27" width="5.4" height="5.4" fill="#50b830"/><rect x="116" y="27" width="5.4" height="5.4" fill="#58b038"/><rect x="121" y="27" width="5.4" height="5.4" fill="#60a050"/><rect x="126" y="27" width="5.4" height="5.4" fill="#689870"/><rect x="131" y="27" width="5.4" height="5.4" fill="#689078"/><rect x="136" y="27" width="5.4" height="5.4" fill="#609870"/><rect x="141" y="27" width="5.4" height="5.4" fill="#50a048"/><rect x="146" y="27" width="5.4" height="5.4" fill="#48b030"/><rect x="151" y="27" width="5.4" height="5.4" fill="#70c050"/><rect x="156" y="27" width="2" height="5.4" fill="#b0dc9e"/><rect x="0" y="32" width="6.4" height="5.4" fill="#90b080"/><rect x="6" y="32" width="5.4" height="5.4" fill="#507848"/><rect x="11" y="32" width="5.4" height="5.4" fill="#305028"/><rect x="16" y="32" width="5.4" height="5.4" fill="#285828"/><rect x="21" y="32" width="5.4" height="5.4" fill="#287a30"/><rect x="26" y="32" width="5.4" height="5.4" fill="#208830"/><rect x="31" y="32" width="5.4" height="5.4" fill="#208830"/><rect x="36" y="32" width="5.4" height="5.4" fill="#208830"/><rect x="41" y="32" width="5.4" height="5.4" fill="#208830"/><rect x="46" y="32" width="5.4" height="5.4" fill="#208830"/><rect x="51" y="32" width="5.4" height="5.4" fill="#208830"/><rect x="56" y="32" width="5.4" height="5.4" fill="#208830"/><rect x="61" y="32" width="5.4" height="5.4" fill="#208830"/><rect x="66" y="32" width="5.4" height="5.4" fill="#208830"/><rect x="71" y="32" width="5.4" height="5.4" fill="#208830"/><rect x="76" y="32" width="5.4" height="5.4" fill="#208830"/><rect x="81" y="32" width="5.4" height="5.4" fill="#288830"/><rect x="86" y="32" width="5.4" height="5.4" fill="#309838"/><rect x="91" y="32" width="5.4" height="5.4" fill="#38a838"/><rect x="96" y="32" width="5.4" height="5.4" fill="#38b838"/><rect x="101" y="32" width="5.4" height="5.4" fill="#40c038"/><rect x="106" y="32" width="5.4" height="5.4" fill="#40c038"/><rect x="111" y="32" width="5.4" height="5.4" fill="#48c040"/><rect x="116" y="32" width="5.4" height="5.4" fill="#50b848"/><rect x="121" y="32" width="5.4" height="5.4" fill="#58b058"/><rect x="126" y="32" width="5.4" height="5.4" fill="#60a868"/><rect x="131" y="32" width="5.4" height="5.4" fill="#60a870"/><rect x="136" y="32" width="5.4" height="5.4" fill="#58a060"/><rect x="141" y="32" width="5.4" height="5.4" fill="#50a040"/><rect x="146" y="32" width="5.4" height="5.4" fill="#40b030"/><rect x="151" y="32" width="5.4" height="5.4" fill="#70c058"/><rect x="156" y="32" width="2" height="5.4" fill="#b0dca3"/><rect x="0" y="37" width="6.4" height="5.4" fill="#a8b8a8"/><rect x="6" y="37" width="5.4" height="5.4" fill="#708078"/><rect x="11" y="37" width="5.4" height="5.4" fill="#506058"/><rect x="16" y="37" width="5.4" height="5.4" fill="#407850"/><rect x="21" y="37" width="5.4" height="5.4" fill="#30a040"/><rect x="26" y="37" width="5.4" height="5.4" fill="#28b040"/><rect x="31" y="37" width="5.4" height="5.4" fill="#28b040"/><rect x="36" y="37" width="5.4" height="5.4" fill="#28b040"/><rect x="41" y="37" width="5.4" height="5.4" fill="#28b040"/><rect x="46" y="37" width="5.4" height="5.4" fill="#28b040"/><rect x="51" y="37" width="5.4" height="5.4" fill="#28a838"/><rect x="56" y="37" width="5.4" height="5.4" fill="#28a838"/><rect x="61" y="37" width="5.4" height="5.4" fill="#28a838"/><rect x="66" y="37" width="5.4" height="5.4" fill="#28a838"/><rect x="71" y="37" width="5.4" height="5.4" fill="#28a838"/><rect x="76" y="37" width="5.4" height="5.4" fill="#28a838"/><rect x="81" y="37" width="5.4" height="5.4" fill="#30b038"/><rect x="86" y="37" width="5.4" height="5.4" fill="#30b838"/><rect x="91" y="37" width="5.4" height="5.4" fill="#38c038"/><rect x="96" y="37" width="5.4" height="5.4" fill="#38c038"/><rect x="101" y="37" width="5.4" height="5.4" fill="#38c038"/><rect x="106" y="37" width="5.4" height="5.4" fill="#40c040"/><rect x="111" y="37" width="5.4" height="5.4" fill="#40c040"/><rect x="116" y="37" width="5.4" height="5.4" fill="#48c048"/><rect x="121" y="37" width="5.4" height="5.4" fill="#50c058"/><rect x="126" y="37" width="5.4" height="5.4" fill="#58c060"/><rect x="131" y="37" width="5.4" height="5.4" fill="#58c060"/><rect x="136" y="37" width="5.4" height="5.4" fill="#50b048"/><rect x="141" y="37" width="5.4" height="5.4" fill="#50b838"/><rect x="146" y="37" width="5.4" height="5.4" fill="#48b830"/><rect x="151" y="37" width="5.4" height="5.4" fill="#70c058"/><rect x="156" y="37" width="2" height="5.4" fill="#b0dca3"/><rect x="0" y="42" width="6.4" height="5.4" fill="#b0bcc8"/><rect x="6" y="42" width="5.4" height="5.4" fill="#8898a8"/><rect x="11" y="42" width="5.4" height="5.4" fill="#809890"/><rect x="16" y="42" width="5.4" height="5.4" fill="#70a078"/><rect x="21" y="42" width="5.4" height="5.4" fill="#48b858"/><rect x="26" y="42" width="5.4" height="5.4" fill="#38c050"/><rect x="31" y="42" width="5.4" height="5.4" fill="#38c050"/><rect x="36" y="42" width="5.4" height="5.4" fill="#38c050"/><rect x="41" y="42" width="5.4" height="5.4" fill="#38c048"/><rect x="46" y="42" width="5.4" height="5.4" fill="#38b848"/><rect x="51" y="42" width="5.4" height="5.4" fill="#38b840"/><rect x="56" y="42" width="5.4" height="5.4" fill="#38b840"/><rect x="61" y="42" width="5.4" height="5.4" fill="#38b840"/><rect x="66" y="42" width="5.4" height="5.4" fill="#38c040"/><rect x="71" y="42" width="5.4" height="5.4" fill="#38c040"/><rect x="76" y="42" width="5.4" height="5.4" fill="#38c040"/><rect x="81" y="42" width="5.4" height="5.4" fill="#38c040"/><rect x="86" y="42" width="5.4" height="5.4" fill="#30c040"/><rect x="91" y="42" width="5.4" height="5.4" fill="#30c040"/><rect x="96" y="42" width="5.4" height="5.4" fill="#30c040"/><rect x="101" y="42" width="5.4" height="5.4" fill="#38c040"/><rect x="106" y="42" width="5.4" height="5.4" fill="#38c040"/><rect x="111" y="42" width="5.4" height="5.4" fill="#40c840"/><rect x="116" y="42" width="5.4" height="5.4" fill="#40c840"/><rect x="121" y="42" width="5.4" height="5.4" fill="#40d040"/><rect x="126" y="42" width="5.4" height="5.4" fill="#40d040"/><rect x="131" y="42" width="5.4" height="5.4" fill="#40c840"/><rect x="136" y="42" width="5.4" height="5.4" fill="#48c038"/><rect x="141" y="42" width="5.4" height="5.4" fill="#48b830"/><rect x="146" y="42" width="5.4" height="5.4" fill="#50b830"/><rect x="151" y="42" width="5.4" height="5.4" fill="#70c058"/><rect x="156" y="42" width="2" height="5.4" fill="#b0dca3"/><rect x="0" y="47" width="6.4" height="5.4" fill="#b8c4d0"/><rect x="6" y="47" width="5.4" height="5.4" fill="#98a8b8"/><rect x="11" y="47" width="5.4" height="5.4" fill="#98aab0"/><rect x="16" y="47" width="5.4" height="5.4" fill="#88b098"/><rect x="21" y="47" width="5.4" height="5.4" fill="#68c078"/><rect x="26" y="47" width="5.4" height="5.4" fill="#60c878"/><rect x="31" y="47" width="5.4" height="5.4" fill="#60c878"/><rect x="36" y="47" width="5.4" height="5.4" fill="#60c070"/><rect x="41" y="47" width="5.4" height="5.4" fill="#58b868"/><rect x="46" y="47" width="5.4" height="5.4" fill="#50b060"/><rect x="51" y="47" width="5.4" height="5.4" fill="#50b050"/><rect x="56" y="47" width="5.4" height="5.4" fill="#48c048"/><rect x="61" y="47" width="5.4" height="5.4" fill="#58c858"/><rect x="66" y="47" width="5.4" height="5.4" fill="#60c860"/><rect x="71" y="47" width="5.4" height="5.4" fill="#58c850"/><rect x="76" y="47" width="5.4" height="5.4" fill="#58c858"/><rect x="81" y="47" width="5.4" height="5.4" fill="#40c040"/><rect x="86" y="47" width="5.4" height="5.4" fill="#30b840"/><rect x="91" y="47" width="5.4" height="5.4" fill="#30b048"/><rect x="96" y="47" width="5.4" height="5.4" fill="#38b848"/><rect x="101" y="47" width="5.4" height="5.4" fill="#40c048"/><rect x="106" y="47" width="5.4" height="5.4" fill="#40c840"/><rect x="111" y="47" width="5.4" height="5.4" fill="#48d040"/><rect x="116" y="47" width="5.4" height="5.4" fill="#48d040"/><rect x="121" y="47" width="5.4" height="5.4" fill="#40d038"/><rect x="126" y="47" width="5.4" height="5.4" fill="#40c838"/><rect x="131" y="47" width="5.4" height="5.4" fill="#40c038"/><rect x="136" y="47" width="5.4" height="5.4" fill="#40b830"/><rect x="141" y="47" width="5.4" height="5.4" fill="#40b030"/><rect x="146" y="47" width="5.4" height="5.4" fill="#48b030"/><rect x="151" y="47" width="5.4" height="5.4" fill="#70b860"/><rect x="156" y="47" width="2" height="5.4" fill="#b0d7a7"/><rect x="0" y="52" width="6.4" height="5.4" fill="#b8c4d0"/><rect x="6" y="52" width="5.4" height="5.4" fill="#a0b0c0"/><rect x="11" y="52" width="5.4" height="5.4" fill="#a0b0b8"/><rect x="16" y="52" width="5.4" height="5.4" fill="#90b0a8"/><rect x="21" y="52" width="5.4" height="5.4" fill="#88b8a0"/><rect x="26" y="52" width="5.4" height="5.4" fill="#88b898"/><rect x="31" y="52" width="5.4" height="5.4" fill="#88b898"/><rect x="36" y="52" width="5.4" height="5.4" fill="#80b090"/><rect x="41" y="52" width="5.4" height="5.4" fill="#78a888"/><rect x="46" y="52" width="5.4" height="5.4" fill="#70a878"/><rect x="51" y="52" width="5.4" height="5.4" fill="#60a860"/><rect x="56" y="52" width="5.4" height="5.4" fill="#68b868"/><rect x="61" y="52" width="5.4" height="5.4" fill="#80c880"/><rect x="66" y="52" width="5.4" height="5.4" fill="#90d088"/><rect x="71" y="52" width="5.4" height="5.4" fill="#80c070"/><rect x="76" y="52" width="5.4" height="5.4" fill="#70c060"/><rect x="81" y="52" width="5.4" height="5.4" fill="#50c040"/><rect x="86" y="52" width="5.4" height="5.4" fill="#38b840"/><rect x="91" y="52" width="5.4" height="5.4" fill="#30b048"/><rect x="96" y="52" width="5.4" height="5.4" fill="#38b048"/><rect x="101" y="52" width="5.4" height="5.4" fill="#40b840"/><rect x="106" y="52" width="5.4" height="5.4" fill="#48c030"/><rect x="111" y="52" width="5.4" height="5.4" fill="#50c028"/><rect x="116" y="52" width="5.4" height="5.4" fill="#48c028"/><rect x="121" y="52" width="5.4" height="5.4" fill="#40c030"/><rect x="126" y="52" width="5.4" height="5.4" fill="#40b830"/><rect x="131" y="52" width="5.4" height="5.4" fill="#40b030"/><rect x="136" y="52" width="5.4" height="5.4" fill="#38a830"/><rect x="141" y="52" width="5.4" height="5.4" fill="#40a030"/><rect x="146" y="52" width="5.4" height="5.4" fill="#50a038"/><rect x="151" y="52" width="5.4" height="5.4" fill="#70b060"/><rect x="156" y="52" width="2" height="5.4" fill="#b0d3a7"/><rect x="0" y="57" width="6.4" height="5.4" fill="#b8c4d0"/><rect x="6" y="57" width="5.4" height="5.4" fill="#a0b0c0"/><rect x="11" y="57" width="5.4" height="5.4" fill="#a8b8c0"/><rect x="16" y="57" width="5.4" height="5.4" fill="#a8b8c0"/><rect x="21" y="57" width="5.4" height="5.4" fill="#a0b0b8"/><rect x="26" y="57" width="5.4" height="5.4" fill="#98b0b0"/><rect x="31" y="57" width="5.4" height="5.4" fill="#98b0b0"/><rect x="36" y="57" width="5.4" height="5.4" fill="#90a8a8"/><rect x="41" y="57" width="5.4" height="5.4" fill="#88a0a0"/><rect x="46" y="57" width="5.4" height="5.4" fill="#80a090"/><rect x="51" y="57" width="5.4" height="5.4" fill="#709878"/><rect x="56" y="57" width="5.4" height="5.4" fill="#709870"/><rect x="61" y="57" width="5.4" height="5.4" fill="#88a888"/><rect x="66" y="57" width="5.4" height="5.4" fill="#98b090"/><rect x="71" y="57" width="5.4" height="5.4" fill="#80a070"/><rect x="76" y="57" width="5.4" height="5.4" fill="#88b070"/><rect x="81" y="57" width="5.4" height="5.4" fill="#60a848"/><rect x="86" y="57" width="5.4" height="5.4" fill="#40a040"/><rect x="91" y="57" width="5.4" height="5.4" fill="#389040"/><rect x="96" y="57" width="5.4" height="5.4" fill="#389040"/><rect x="101" y="57" width="5.4" height="5.4" fill="#409838"/><rect x="106" y="57" width="5.4" height="5.4" fill="#40a030"/><rect x="111" y="57" width="5.4" height="5.4" fill="#48a820"/><rect x="116" y="57" width="5.4" height="5.4" fill="#40a820"/><rect x="121" y="57" width="5.4" height="5.4" fill="#309828"/><rect x="126" y="57" width="5.4" height="5.4" fill="#289028"/><rect x="131" y="57" width="5.4" height="5.4" fill="#289028"/><rect x="136" y="57" width="5.4" height="5.4" fill="#289028"/><rect x="141" y="57" width="5.4" height="5.4" fill="#289030"/><rect x="146" y="57" width="5.4" height="5.4" fill="#409040"/><rect x="151" y="57" width="5.4" height="5.4" fill="#70a868"/><rect x="156" y="57" width="2" height="5.4" fill="#b0cfab"/><rect x="0" y="62" width="6.4" height="5.4" fill="#b8c4d0"/><rect x="6" y="62" width="5.4" height="5.4" fill="#a0b0c0"/><rect x="11" y="62" width="5.4" height="5.4" fill="#a0b0c0"/><rect x="16" y="62" width="5.4" height="5.4" fill="#98b0b8"/><rect x="21" y="62" width="5.4" height="5.4" fill="#98b0b8"/><rect x="26" y="62" width="5.4" height="5.4" fill="#98b0b8"/><rect x="31" y="62" width="5.4" height="5.4" fill="#98b0b0"/><rect x="36" y="62" width="5.4" height="5.4" fill="#98b0b0"/><rect x="41" y="62" width="5.4" height="5.4" fill="#a0a8b0"/><rect x="46" y="62" width="5.4" height="5.4" fill="#889098"/><rect x="51" y="62" width="5.4" height="5.4" fill="#687870"/><rect x="56" y="62" width="5.4" height="5.4" fill="#687468"/><rect x="61" y="62" width="5.4" height="5.4" fill="#707870"/><rect x="66" y="62" width="5.4" height="5.4" fill="#808a80"/><rect x="71" y="62" width="5.4" height="5.4" fill="#80988a"/><rect x="76" y="62" width="5.4" height="5.4" fill="#808a80"/><rect x="81" y="62" width="5.4" height="5.4" fill="#709068"/><rect x="86" y="62" width="5.4" height="5.4" fill="#508850"/><rect x="91" y="62" width="5.4" height="5.4" fill="#487848"/><rect x="96" y="62" width="5.4" height="5.4" fill="#387030"/><rect x="101" y="62" width="5.4" height="5.4" fill="#307020"/><rect x="106" y="62" width="5.4" height="5.4" fill="#388020"/><rect x="111" y="62" width="5.4" height="5.4" fill="#309020"/><rect x="116" y="62" width="5.4" height="5.4" fill="#309020"/><rect x="121" y="62" width="5.4" height="5.4" fill="#288820"/><rect x="126" y="62" width="5.4" height="5.4" fill="#208020"/><rect x="131" y="62" width="5.4" height="5.4" fill="#208028"/><rect x="136" y="62" width="5.4" height="5.4" fill="#208828"/><rect x="141" y="62" width="5.4" height="5.4" fill="#289030"/><rect x="146" y="62" width="5.4" height="5.4" fill="#309838"/><rect x="151" y="62" width="5.4" height="5.4" fill="#60b060"/><rect x="156" y="62" width="2" height="5.4" fill="#a7d3a7"/><rect x="0" y="67" width="6.4" height="5.4" fill="#b8c4d0"/><rect x="6" y="67" width="5.4" height="5.4" fill="#a0b0c0"/><rect x="11" y="67" width="5.4" height="5.4" fill="#98a8b8"/><rect x="16" y="67" width="5.4" height="5.4" fill="#98a8b8"/><rect x="21" y="67" width="5.4" height="5.4" fill="#98a8b8"/><rect x="26" y="67" width="5.4" height="5.4" fill="#98a8b8"/><rect x="31" y="67" width="5.4" height="5.4" fill="#a0b0c0"/><rect x="36" y="67" width="5.4" height="5.4" fill="#a0b0c0"/><rect x="41" y="67" width="5.4" height="5.4" fill="#a0a8b8"/><rect x="46" y="67" width="5.4" height="5.4" fill="#707880"/><rect x="51" y="67" width="5.4" height="5.4" fill="#505858"/><rect x="56" y="67" width="5.4" height="5.4" fill="#505858"/><rect x="61" y="67" width="5.4" height="5.4" fill="#686868"/><rect x="66" y="67" width="5.4" height="5.4" fill="#808880"/><rect x="71" y="67" width="5.4" height="5.4" fill="#888a88"/><rect x="76" y="67" width="5.4" height="5.4" fill="#888a88"/><rect x="81" y="67" width="5.4" height="5.4" fill="#808880"/><rect x="86" y="67" width="5.4" height="5.4" fill="#708070"/><rect x="91" y="67" width="5.4" height="5.4" fill="#607060"/><rect x="96" y="67" width="5.4" height="5.4" fill="#404a38"/><rect x="101" y="67" width="5.4" height="5.4" fill="#304428"/><rect x="106" y="67" width="5.4" height="5.4" fill="#285a20"/><rect x="111" y="67" width="5.4" height="5.4" fill="#206a20"/><rect x="116" y="67" width="5.4" height="5.4" fill="#187020"/><rect x="121" y="67" width="5.4" height="5.4" fill="#187020"/><rect x="126" y="67" width="5.4" height="5.4" fill="#186820"/><rect x="131" y="67" width="5.4" height="5.4" fill="#207828"/><rect x="136" y="67" width="5.4" height="5.4" fill="#288c30"/><rect x="141" y="67" width="5.4" height="5.4" fill="#309838"/><rect x="146" y="67" width="5.4" height="5.4" fill="#40a848"/><rect x="151" y="67" width="5.4" height="5.4" fill="#70b870"/><rect x="156" y="67" width="2" height="5.4" fill="#b0d7b0"/><rect x="0" y="72" width="6.4" height="5.4" fill="#b8c4d0"/><rect x="6" y="72" width="5.4" height="5.4" fill="#a0b0c0"/><rect x="11" y="72" width="5.4" height="5.4" fill="#98a8b8"/><rect x="16" y="72" width="5.4" height="5.4" fill="#98a8b8"/><rect x="21" y="72" width="5.4" height="5.4" fill="#98a8b8"/><rect x="26" y="72" width="5.4" height="5.4" fill="#a0b0c0"/><rect x="31" y="72" width="5.4" height="5.4" fill="#a8b8c8"/><rect x="36" y="72" width="5.4" height="5.4" fill="#a8b8c8"/><rect x="41" y="72" width="5.4" height="5.4" fill="#a0a8b8"/><rect x="46" y="72" width="5.4" height="5.4" fill="#686878"/><rect x="51" y="72" width="5.4" height="5.4" fill="#404048"/><rect x="56" y="72" width="5.4" height="5.4" fill="#484c50"/><rect x="61" y="72" width="5.4" height="5.4" fill="#787878"/><rect x="66" y="72" width="5.4" height="5.4" fill="#909090"/><rect x="71" y="72" width="5.4" height="5.4" fill="#989898"/><rect x="76" y="72" width="5.4" height="5.4" fill="#989898"/><rect x="81" y="72" width="5.4" height="5.4" fill="#909090"/><rect x="86" y="72" width="5.4" height="5.4" fill="#909090"/><rect x="91" y="72" width="5.4" height="5.4" fill="#707070"/><rect x="96" y="72" width="5.4" height="5.4" fill="#484c48"/><rect x="101" y="72" width="5.4" height="5.4" fill="#303830"/><rect x="106" y="72" width="5.4" height="5.4" fill="#284028"/><rect x="111" y="72" width="5.4" height="5.4" fill="#205a28"/><rect x="116" y="72" width="5.4" height="5.4" fill="#185828"/><rect x="121" y="72" width="5.4" height="5.4" fill="#206028"/><rect x="126" y="72" width="5.4" height="5.4" fill="#287030"/><rect x="131" y="72" width="5.4" height="5.4" fill="#308838"/><rect x="136" y="72" width="5.4" height="5.4" fill="#40a050"/><rect x="141" y="72" width="5.4" height="5.4" fill="#50a860"/><rect x="146" y="72" width="5.4" height="5.4" fill="#60b068"/><rect x="151" y="72" width="5.4" height="5.4" fill="#80c080"/><rect x="156" y="72" width="2" height="5.4" fill="#b9dcb9"/><rect x="0" y="77" width="6.4" height="5.4" fill="#b8c4d0"/><rect x="6" y="77" width="5.4" height="5.4" fill="#a0b0c0"/><rect x="11" y="77" width="5.4" height="5.4" fill="#98a8b8"/><rect x="16" y="77" width="5.4" height="5.4" fill="#98a8b8"/><rect x="21" y="77" width="5.4" height="5.4" fill="#a0b0c0"/><rect x="26" y="77" width="5.4" height="5.4" fill="#a0b0c0"/><rect x="31" y="77" width="5.4" height="5.4" fill="#a8b8c8"/><rect x="36" y="77" width="5.4" height="5.4" fill="#b0b8c8"/><rect x="41" y="77" width="5.4" height="5.4" fill="#a0a0b8"/><rect x="46" y="77" width="5.4" height="5.4" fill="#606078"/><rect x="51" y="77" width="5.4" height="5.4" fill="#383848"/><rect x="56" y="77" width="5.4" height="5.4" fill="#484c50"/><rect x="61" y="77" width="5.4" height="5.4" fill="#787878"/><rect x="66" y="77" width="5.4" height="5.4" fill="#909090"/><rect x="71" y="77" width="5.4" height="5.4" fill="#989898"/><rect x="76" y="77" width="5.4" height="5.4" fill="#989898"/><rect x="81" y="77" width="5.4" height="5.4" fill="#909090"/><rect x="86" y="77" width="5.4" height="5.4" fill="#909090"/><rect x="91" y="77" width="5.4" height="5.4" fill="#707070"/><rect x="96" y="77" width="5.4" height="5.4" fill="#484c48"/><rect x="101" y="77" width="5.4" height="5.4" fill="#303830"/><rect x="106" y="77" width="5.4" height="5.4" fill="#285038"/><rect x="111" y="77" width="5.4" height="5.4" fill="#206838"/><rect x="116" y="77" width="5.4" height="5.4" fill="#287040"/><rect x="121" y="77" width="5.4" height="5.4" fill="#308048"/><rect x="126" y="77" width="5.4" height="5.4" fill="#389058"/><rect x="131" y="77" width="5.4" height="5.4" fill="#40a060"/><rect x="136" y="77" width="5.4" height="5.4" fill="#50a868"/><rect x="141" y="77" width="5.4" height="5.4" fill="#60b070"/><rect x="146" y="77" width="5.4" height="5.4" fill="#60b070"/><rect x="151" y="77" width="5.4" height="5.4" fill="#80c080"/><rect x="156" y="77" width="2" height="5.4" fill="#b9dcb9"/><rect x="0" y="82" width="6.4" height="5.4" fill="#b8c4d0"/><rect x="6" y="82" width="5.4" height="5.4" fill="#a0b0c0"/><rect x="11" y="82" width="5.4" height="5.4" fill="#98a8b8"/><rect x="16" y="82" width="5.4" height="5.4" fill="#a0b0c0"/><rect x="21" y="82" width="5.4" height="5.4" fill="#a0b0c0"/><rect x="26" y="82" width="5.4" height="5.4" fill="#a8b8c8"/><rect x="31" y="82" width="5.4" height="5.4" fill="#b0b8c8"/><rect x="36" y="82" width="5.4" height="5.4" fill="#b0b0c8"/><rect x="41" y="82" width="5.4" height="5.4" fill="#9888a8"/><rect x="46" y="82" width="5.4" height="5.4" fill="#605070"/><rect x="51" y="82" width="5.4" height="5.4" fill="#383848"/><rect x="56" y="82" width="5.4" height="5.4" fill="#484c50"/><rect x="61" y="82" width="5.4" height="5.4" fill="#787878"/><rect x="66" y="82" width="5.4" height="5.4" fill="#909090"/><rect x="71" y="82" width="5.4" height="5.4" fill="#989898"/><rect x="76" y="82" width="5.4" height="5.4" fill="#989898"/><rect x="81" y="82" width="5.4" height="5.4" fill="#909090"/><rect x="86" y="82" width="5.4" height="5.4" fill="#909090"/><rect x="91" y="82" width="5.4" height="5.4" fill="#707070"/><rect x="96" y="82" width="5.4" height="5.4" fill="#484c48"/><rect x="101" y="82" width="5.4" height="5.4" fill="#383c38"/><rect x="106" y="82" width="5.4" height="5.4" fill="#405850"/><rect x="111" y="82" width="5.4" height="5.4" fill="#508060"/><rect x="116" y="82" width="5.4" height="5.4" fill="#509060"/><rect x="121" y="82" width="5.4" height="5.4" fill="#509860"/><rect x="126" y="82" width="5.4" height="5.4" fill="#58a068"/><rect x="131" y="82" width="5.4" height="5.4" fill="#60a868"/><rect x="136" y="82" width="5.4" height="5.4" fill="#60a868"/><rect x="141" y="82" width="5.4" height="5.4" fill="#60a868"/><rect x="146" y="82" width="5.4" height="5.4" fill="#60a868"/><rect x="151" y="82" width="5.4" height="5.4" fill="#80b880"/><rect x="156" y="82" width="2" height="5.4" fill="#b9d7b9"/><rect x="0" y="87" width="6.4" height="5.4" fill="#b8c4d0"/><rect x="6" y="87" width="5.4" height="5.4" fill="#a0b0c0"/><rect x="11" y="87" width="5.4" height="5.4" fill="#a0b0c0"/><rect x="16" y="87" width="5.4" height="5.4" fill="#a0b0c0"/><rect x="21" y="87" width="5.4" height="5.4" fill="#a8b8c8"/><rect x="26" y="87" width="5.4" height="5.4" fill="#b0bcc8"/><rect x="31" y="87" width="5.4" height="5.4" fill="#c0b8c8"/><rect x="36" y="87" width="5.4" height="5.4" fill="#c0a0b0"/><rect x="41" y="87" width="5.4" height="5.4" fill="#a07888"/><rect x="46" y="87" width="5.4" height="5.4" fill="#684858"/><rect x="51" y="87" width="5.4" height="5.4" fill="#403840"/><rect x="56" y="87" width="5.4" height="5.4" fill="#484848"/><rect x="61" y="87" width="5.4" height="5.4" fill="#707070"/><rect x="66" y="87" width="5.4" height="5.4" fill="#909090"/><rect x="71" y="87" width="5.4" height="5.4" fill="#989898"/><rect x="76" y="87" width="5.4" height="5.4" fill="#989898"/><rect x="81" y="87" width="5.4" height="5.4" fill="#909090"/><rect x="86" y="87" width="5.4" height="5.4" fill="#909090"/><rect x="91" y="87" width="5.4" height="5.4" fill="#707070"/><rect x="96" y="87" width="5.4" height="5.4" fill="#484c48"/><rect x="101" y="87" width="5.4" height="5.4" fill="#404448"/><rect x="106" y="87" width="5.4" height="5.4" fill="#587070"/><rect x="111" y="87" width="5.4" height="5.4" fill="#709888"/><rect x="116" y="87" width="5.4" height="5.4" fill="#68a078"/><rect x="121" y="87" width="5.4" height="5.4" fill="#58a060"/><rect x="126" y="87" width="5.4" height="5.4" fill="#50a058"/><rect x="131" y="87" width="5.4" height="5.4" fill="#50a058"/><rect x="136" y="87" width="5.4" height="5.4" fill="#50a058"/><rect x="141" y="87" width="5.4" height="5.4" fill="#50a058"/><rect x="146" y="87" width="5.4" height="5.4" fill="#50a050"/><rect x="151" y="87" width="5.4" height="5.4" fill="#70b070"/><rect x="156" y="87" width="2" height="5.4" fill="#b0d3b0"/><rect x="0" y="92" width="6.4" height="5.4" fill="#b8c4d0"/><rect x="6" y="92" width="5.4" height="5.4" fill="#a0b0c0"/><rect x="11" y="92" width="5.4" height="5.4" fill="#a0b0c0"/><rect x="16" y="92" width="5.4" height="5.4" fill="#a8b8c8"/><rect x="21" y="92" width="5.4" height="5.4" fill="#b0bcc8"/><rect x="26" y="92" width="5.4" height="5.4" fill="#b8c0d0"/><rect x="31" y="92" width="5.4" height="5.4" fill="#d0b0b8"/><rect x="36" y="92" width="5.4" height="5.4" fill="#c89090"/><rect x="41" y="92" width="5.4" height="5.4" fill="#a86858"/><rect x="46" y="92" width="5.4" height="5.4" fill="#704840"/><rect x="51" y="92" width="5.4" height="5.4" fill="#403838"/><rect x="56" y="92" width="5.4" height="5.4" fill="#484848"/><rect x="61" y="92" width="5.4" height="5.4" fill="#686868"/><rect x="66" y="92" width="5.4" height="5.4" fill="#889088"/><rect x="71" y="92" width="5.4" height="5.4" fill="#909890"/><rect x="76" y="92" width="5.4" height="5.4" fill="#909890"/><rect x="81" y="92" width="5.4" height="5.4" fill="#909890"/><rect x="86" y="92" width="5.4" height="5.4" fill="#909090"/><rect x="91" y="92" width="5.4" height="5.4" fill="#707070"/><rect x="96" y="92" width="5.4" height="5.4" fill="#484c48"/><rect x="101" y="92" width="5.4" height="5.4" fill="#404448"/><rect x="106" y="92" width="5.4" height="5.4" fill="#608078"/><rect x="111" y="92" width="5.4" height="5.4" fill="#88a898"/><rect x="116" y="92" width="5.4" height="5.4" fill="#78b088"/><rect x="121" y="92" width="5.4" height="5.4" fill="#50a058"/><rect x="126" y="92" width="5.4" height="5.4" fill="#40a048"/><rect x="131" y="92" width="5.4" height="5.4" fill="#40a048"/><rect x="136" y="92" width="5.4" height="5.4" fill="#40a040"/><rect x="141" y="92" width="5.4" height="5.4" fill="#40a040"/><rect x="146" y="92" width="5.4" height="5.4" fill="#40a040"/><rect x="151" y="92" width="5.4" height="5.4" fill="#70b070"/><rect x="156" y="92" width="2" height="5.4" fill="#b0d3b0"/><rect x="0" y="97" width="6.4" height="5.4" fill="#b8c4d0"/><rect x="6" y="97" width="5.4" height="5.4" fill="#a0b0c0"/><rect x="11" y="97" width="5.4" height="5.4" fill="#a8b8c8"/><rect x="16" y="97" width="5.4" height="5.4" fill="#b0bcc8"/><rect x="21" y="97" width="5.4" height="5.4" fill="#b8c0d0"/><rect x="26" y="97" width="5.4" height="5.4" fill="#c0c0d0"/><rect x="31" y="97" width="5.4" height="5.4" fill="#d0b0a8"/><rect x="36" y="97" width="5.4" height="5.4" fill="#c89078"/><rect x="41" y="97" width="5.4" height="5.4" fill="#b07048"/><rect x="46" y="97" width="5.4" height="5.4" fill="#785838"/><rect x="51" y="97" width="5.4" height="5.4" fill="#484030"/><rect x="56" y="97" width="5.4" height="5.4" fill="#484840"/><rect x="61" y="97" width="5.4" height="5.4" fill="#686a60"/><rect x="66" y="97" width="5.4" height="5.4" fill="#788870"/><rect x="71" y="97" width="5.4" height="5.4" fill="#809068"/><rect x="76" y="97" width="5.4" height="5.4" fill="#809068"/><rect x="81" y="97" width="5.4" height="5.4" fill="#809068"/><rect x="86" y="97" width="5.4" height="5.4" fill="#788a68"/><rect x="91" y="97" width="5.4" height="5.4" fill="#607060"/><rect x="96" y="97" width="5.4" height="5.4" fill="#404840"/><rect x="101" y="97" width="5.4" height="5.4" fill="#404448"/><rect x="106" y="97" width="5.4" height="5.4" fill="#607870"/><rect x="111" y="97" width="5.4" height="5.4" fill="#80a090"/><rect x="116" y="97" width="5.4" height="5.4" fill="#70a880"/><rect x="121" y="97" width="5.4" height="5.4" fill="#40a050"/><rect x="126" y="97" width="5.4" height="5.4" fill="#289838"/><rect x="131" y="97" width="5.4" height="5.4" fill="#209830"/><rect x="136" y="97" width="5.4" height="5.4" fill="#209830"/><rect x="141" y="97" width="5.4" height="5.4" fill="#289838"/><rect x="146" y="97" width="5.4" height="5.4" fill="#389840"/><rect x="151" y="97" width="5.4" height="5.4" fill="#60a868"/><rect x="156" y="97" width="2" height="5.4" fill="#a7cfab"/><rect x="0" y="102" width="6.4" height="5.4" fill="#b8c4d0"/><rect x="6" y="102" width="5.4" height="5.4" fill="#a8b8c8"/><rect x="11" y="102" width="5.4" height="5.4" fill="#a8b8c8"/><rect x="16" y="102" width="5.4" height="5.4" fill="#b0c0c8"/><rect x="21" y="102" width="5.4" height="5.4" fill="#b8c4c8"/><rect x="26" y="102" width="5.4" height="5.4" fill="#b0bcb8"/><rect x="31" y="102" width="5.4" height="5.4" fill="#b0b090"/><rect x="36" y="102" width="5.4" height="5.4" fill="#b0a070"/><rect x="41" y="102" width="5.4" height="5.4" fill="#a08050"/><rect x="46" y="102" width="5.4" height="5.4" fill="#786038"/><rect x="51" y="102" width="5.4" height="5.4" fill="#484030"/><rect x="56" y="102" width="5.4" height="5.4" fill="#404030"/><rect x="61" y="102" width="5.4" height="5.4" fill="#506040"/><rect x="66" y="102" width="5.4" height="5.4" fill="#608040"/><rect x="71" y="102" width="5.4" height="5.4" fill="#608838"/><rect x="76" y="102" width="5.4" height="5.4" fill="#607838"/><rect x="81" y="102" width="5.4" height="5.4" fill="#607838"/><rect x="86" y="102" width="5.4" height="5.4" fill="#587038"/><rect x="91" y="102" width="5.4" height="5.4" fill="#405030"/><rect x="96" y="102" width="5.4" height="5.4" fill="#303830"/><rect x="101" y="102" width="5.4" height="5.4" fill="#303830"/><rect x="106" y="102" width="5.4" height="5.4" fill="#486048"/><rect x="111" y="102" width="5.4" height="5.4" fill="#609068"/><rect x="116" y="102" width="5.4" height="5.4" fill="#50a060"/><rect x="121" y="102" width="5.4" height="5.4" fill="#309040"/><rect x="126" y="102" width="5.4" height="5.4" fill="#208a30"/><rect x="131" y="102" width="5.4" height="5.4" fill="#108828"/><rect x="136" y="102" width="5.4" height="5.4" fill="#188a28"/><rect x="141" y="102" width="5.4" height="5.4" fill="#208a30"/><rect x="146" y="102" width="5.4" height="5.4" fill="#309038"/><rect x="151" y="102" width="5.4" height="5.4" fill="#60a060"/><rect x="156" y="102" width="2" height="5.4" fill="#a7caa7"/><rect x="0" y="107" width="6.4" height="5.4" fill="#b0b8c0"/><rect x="6" y="107" width="5.4" height="5.4" fill="#90a0a8"/><rect x="11" y="107" width="5.4" height="5.4" fill="#90a0a8"/><rect x="16" y="107" width="5.4" height="5.4" fill="#98a8a8"/><rect x="21" y="107" width="5.4" height="5.4" fill="#98a8a0"/><rect x="26" y="107" width="5.4" height="5.4" fill="#90a890"/><rect x="31" y="107" width="5.4" height="5.4" fill="#80a078"/><rect x="36" y="107" width="5.4" height="5.4" fill="#809060"/><rect x="41" y="107" width="5.4" height="5.4" fill="#808858"/><rect x="46" y="107" width="5.4" height="5.4" fill="#686038"/><rect x="51" y="107" width="5.4" height="5.4" fill="#383828"/><rect x="56" y="107" width="5.4" height="5.4" fill="#283020"/><rect x="61" y="107" width="5.4" height="5.4" fill="#384828"/><rect x="66" y="107" width="5.4" height="5.4" fill="#405028"/><rect x="71" y="107" width="5.4" height="5.4" fill="#405828"/><rect x="76" y="107" width="5.4" height="5.4" fill="#485828"/><rect x="81" y="107" width="5.4" height="5.4" fill="#485828"/><rect x="86" y="107" width="5.4" height="5.4" fill="#404828"/><rect x="91" y="107" width="5.4" height="5.4" fill="#303820"/><rect x="96" y="107" width="5.4" height="5.4" fill="#202820"/><rect x="101" y="107" width="5.4" height="5.4" fill="#202820"/><rect x="106" y="107" width="5.4" height="5.4" fill="#284030"/><rect x="111" y="107" width="5.4" height="5.4" fill="#306038"/><rect x="116" y="107" width="5.4" height="5.4" fill="#207038"/><rect x="121" y="107" width="5.4" height="5.4" fill="#187028"/><rect x="126" y="107" width="5.4" height="5.4" fill="#107020"/><rect x="131" y="107" width="5.4" height="5.4" fill="#106a18"/><rect x="136" y="107" width="5.4" height="5.4" fill="#087018"/><rect x="141" y="107" width="5.4" height="5.4" fill="#107020"/><rect x="146" y="107" width="5.4" height="5.4" fill="#286a30"/><rect x="151" y="107" width="5.4" height="5.4" fill="#508a58"/><rect x="156" y="107" width="2" height="5.4" fill="#9ebea3"/><rect x="0" y="112" width="6.4" height="5.4" fill="#909898"/><rect x="6" y="112" width="5.4" height="5.4" fill="#707880"/><rect x="11" y="112" width="5.4" height="5.4" fill="#687078"/><rect x="16" y="112" width="5.4" height="5.4" fill="#687070"/><rect x="21" y="112" width="5.4" height="5.4" fill="#687070"/><rect x="26" y="112" width="5.4" height="5.4" fill="#607068"/><rect x="31" y="112" width="5.4" height="5.4" fill="#586858"/><rect x="36" y="112" width="5.4" height="5.4" fill="#586850"/><rect x="41" y="112" width="5.4" height="5.4" fill="#505848"/><rect x="46" y="112" width="5.4" height="5.4" fill="#404030"/><rect x="51" y="112" width="5.4" height="5.4" fill="#282820"/><rect x="56" y="112" width="5.4" height="5.4" fill="#202018"/><rect x="61" y="112" width="5.4" height="5.4" fill="#202818"/><rect x="66" y="112" width="5.4" height="5.4" fill="#283018"/><rect x="71" y="112" width="5.4" height="5.4" fill="#283020"/><rect x="76" y="112" width="5.4" height="5.4" fill="#282c20"/><rect x="81" y="112" width="5.4" height="5.4" fill="#282c20"/><rect x="86" y="112" width="5.4" height="5.4" fill="#202820"/><rect x="91" y="112" width="5.4" height="5.4" fill="#202420"/><rect x="96" y="112" width="5.4" height="5.4" fill="#182018"/><rect x="101" y="112" width="5.4" height="5.4" fill="#182018"/><rect x="106" y="112" width="5.4" height="5.4" fill="#1a2a1a"/><rect x="111" y="112" width="5.4" height="5.4" fill="#1a3018"/><rect x="116" y="112" width="5.4" height="5.4" fill="#183818"/><rect x="121" y="112" width="5.4" height="5.4" fill="#183818"/><rect x="126" y="112" width="5.4" height="5.4" fill="#183818"/><rect x="131" y="112" width="5.4" height="5.4" fill="#183818"/><rect x="136" y="112" width="5.4" height="5.4" fill="#183818"/><rect x="141" y="112" width="5.4" height="5.4" fill="#183818"/><rect x="146" y="112" width="5.4" height="5.4" fill="#284830"/><rect x="151" y="112" width="5.4" height="5.4" fill="#607868"/><rect x="156" y="112" width="2" height="5.4" fill="#a7b4ab"/><rect x="0" y="117" width="6.4" height="5.4" fill="#a0a0a0"/><rect x="6" y="117" width="5.4" height="5.4" fill="#808080"/><rect x="11" y="117" width="5.4" height="5.4" fill="#787878"/><rect x="16" y="117" width="5.4" height="5.4" fill="#787878"/><rect x="21" y="117" width="5.4" height="5.4" fill="#787878"/><rect x="26" y="117" width="5.4" height="5.4" fill="#707070"/><rect x="31" y="117" width="5.4" height="5.4" fill="#707070"/><rect x="36" y="117" width="5.4" height="5.4" fill="#707070"/><rect x="41" y="117" width="5.4" height="5.4" fill="#686868"/><rect x="46" y="117" width="5.4" height="5.4" fill="#606060"/><rect x="51" y="117" width="5.4" height="5.4" fill="#505050"/><rect x="56" y="117" width="5.4" height="5.4" fill="#484848"/><rect x="61" y="117" width="5.4" height="5.4" fill="#404040"/><rect x="66" y="117" width="5.4" height="5.4" fill="#404040"/><rect x="71" y="117" width="5.4" height="5.4" fill="#484848"/><rect x="76" y="117" width="5.4" height="5.4" fill="#484848"/><rect x="81" y="117" width="5.4" height="5.4" fill="#484848"/><rect x="86" y="117" width="5.4" height="5.4" fill="#444444"/><rect x="91" y="117" width="5.4" height="5.4" fill="#404040"/><rect x="96" y="117" width="5.4" height="5.4" fill="#404040"/><rect x="101" y="117" width="5.4" height="5.4" fill="#404040"/><rect x="106" y="117" width="5.4" height="5.4" fill="#484848"/><rect x="111" y="117" width="5.4" height="5.4" fill="#4a504a"/><rect x="116" y="117" width="5.4" height="5.4" fill="#4a504a"/><rect x="121" y="117" width="5.4" height="5.4" fill="#4a504a"/><rect x="126" y="117" width="5.4" height="5.4" fill="#4a504a"/><rect x="131" y="117" width="5.4" height="5.4" fill="#4a504a"/><rect x="136" y="117" width="5.4" height="5.4" fill="#4a504a"/><rect x="141" y="117" width="5.4" height="5.4" fill="#4a504a"/><rect x="146" y="117" width="5.4" height="5.4" fill="#50584f"/><rect x="151" y="117" width="5.4" height="5.4" fill="#707870"/><rect x="156" y="117" width="2" height="5.4" fill="#b0b4b0"/><rect x="0" y="122" width="6.4" height="2.4" fill="#a8a8a8"/><rect x="6" y="122" width="5.4" height="2.4" fill="#a8a8a8"/><rect x="11" y="122" width="5.4" height="2.4" fill="#a8a8a8"/><rect x="16" y="122" width="5.4" height="2.4" fill="#a8a8a8"/><rect x="21" y="122" width="5.4" height="2.4" fill="#a8a8a8"/><rect x="26" y="122" width="5.4" height="2.4" fill="#a8a8a8"/><rect x="31" y="122" width="5.4" height="2.4" fill="#a8a8a8"/><rect x="36" y="122" width="5.4" height="2.4" fill="#a8a8a8"/><rect x="41" y="122" width="5.4" height="2.4" fill="#a8a8a8"/><rect x="46" y="122" width="5.4" height="2.4" fill="#a8a8a8"/><rect x="51" y="122" width="5.4" height="2.4" fill="#a8a8a8"/><rect x="56" y="122" width="5.4" height="2.4" fill="#a8a8a8"/><rect x="61" y="122" width="5.4" height="2.4" fill="#a8a8a8"/><rect x="66" y="122" width="5.4" height="2.4" fill="#a8a8a8"/><rect x="71" y="122" width="5.4" height="2.4" fill="#a8a8a8"/><rect x="76" y="122" width="5.4" height="2.4" fill="#a8a8a8"/><rect x="81" y="122" width="5.4" height="2.4" fill="#a8a8a8"/><rect x="86" y="122" width="5.4" height="2.4" fill="#a8a8a8"/><rect x="91" y="122" width="5.4" height="2.4" fill="#a8a8a8"/><rect x="96" y="122" width="5.4" height="2.4" fill="#a8a8a8"/><rect x="101" y="122" width="5.4" height="2.4" fill="#a8a8a8"/><rect x="106" y="122" width="5.4" height="2.4" fill="#a8a8a8"/><rect x="111" y="122" width="5.4" height="2.4" fill="#a8a8a8"/><rect x="116" y="122" width="5.4" height="2.4" fill="#a8a8a8"/><rect x="121" y="122" width="5.4" height="2.4" fill="#a8a8a8"/><rect x="126" y="122" width="5.4" height="2.4" fill="#a8a8a8"/><rect x="131" y="122" width="5.4" height="2.4" fill="#a8a8a8"/><rect x="136" y="122" width="5.4" height="2.4" fill="#a8a8a8"/><rect x="141" y="122" width="5.4" height="2.4" fill="#a8a8a8"/><rect x="146" y="122" width="5.4" height="2.4" fill="#a8a8a8"/><rect x="151" y="122" width="5.4" height="2.4" fill="#a8a8a8"/><rect x="156" y="122" width="2" height="2.4" fill="#cfcfcf"/></svg></div>
<svg class="a" style="left:1226px;top:822px" width="20" height="20" viewBox="0 0 20 20"><circle cx="10" cy="10" r="8.6" fill="none" stroke="#e0453d" stroke-width="1.9"/><path d="M4 4L16 16" stroke="#e0453d" stroke-width="1.9"/></svg>
<div class="t" style="left:1255.6px;top:825.14px;font-size:14.6px;color:#333;-webkit-text-stroke:0.4px #333;letter-spacing:-0.2px">ЗАБЛОКИРОВАТЬ</div>
<svg class="a" style="left:1419px;top:822px" width="20" height="20" viewBox="0 0 20 20"><circle cx="10" cy="10" r="8.6" fill="none" stroke="#3aaa35" stroke-width="1.9"/><path d="M6 10.3L8.9 13.2L14.2 7.3" fill="none" stroke="#3aaa35" stroke-width="1.9"/></svg>
<div class="t" style="left:1449px;top:825.14px;font-size:14.6px;color:#333;-webkit-text-stroke:0.4px #333;letter-spacing:-0.4px">НАРУШЕНИЙ НЕТ</div>
<div class="a" style="left:1620.3px;top:823.8px;width:3.4px;height:3.4px;border-radius:50%;background:#8c8c8c"></div>
<div class="a" style="left:1620.3px;top:830.5px;width:3.4px;height:3.4px;border-radius:50%;background:#8c8c8c"></div>
<div class="a" style="left:1620.3px;top:837.3px;width:3.4px;height:3.4px;border-radius:50%;background:#8c8c8c"></div>
</body></html>
